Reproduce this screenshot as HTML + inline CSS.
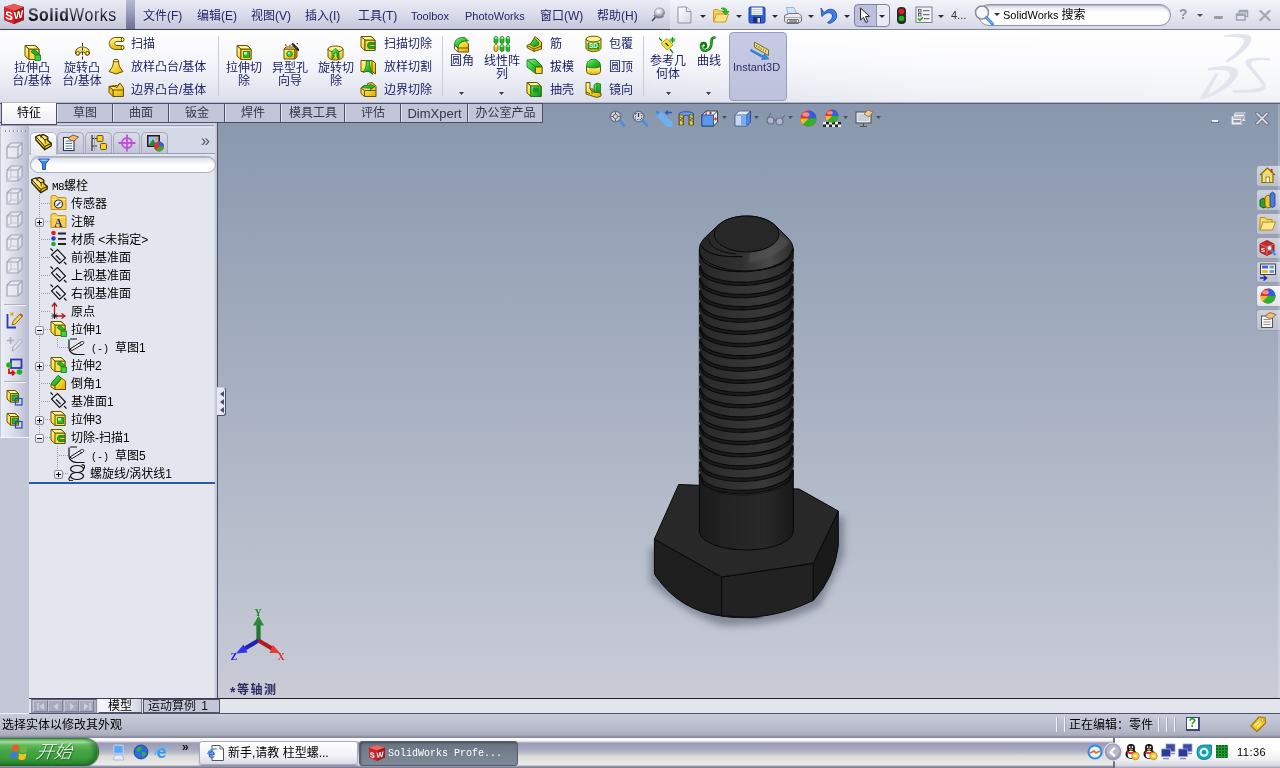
<!DOCTYPE html>
<html lang="zh-CN">
<head>
<meta charset="utf-8">
<title>SolidWorks</title>
<style>
*{box-sizing:border-box;margin:0;padding:0}
html,body{width:1280px;height:768px;overflow:hidden;background:#c8cbd8}
body{position:relative;will-change:transform;font-family:"Liberation Sans","Noto Sans CJK SC",sans-serif;font-size:12px;color:#1c2060;line-height:1}
.abs{position:absolute}
.t{position:absolute;white-space:nowrap}
/* menu bar */
#menubar{left:0;top:0;width:1280px;height:30px;background:linear-gradient(#e9ebf4 0%,#dcdfec 40%,#c5c8db 100%);border-bottom:1px solid #3c3f55}
#logoDiv{left:126px;top:0;width:9px;height:29px;background:linear-gradient(#b9bcd4,#6e7198)}
#qbar{left:670px;top:0;width:610px;height:30px;background:linear-gradient(#f3f4f9,#e3e5ef 55%,#d5d8e6);border-bottom:1px solid #7e8299}
.menu{top:10px;font-size:12px;color:#23276a}
/* ribbon */
#ribbon{left:0;top:30px;width:1280px;height:72px;background:linear-gradient(90deg,rgba(255,255,255,0) 0,rgba(255,255,255,0) 50%,rgba(255,255,255,.5) 72%,rgba(255,255,255,.6) 100%),linear-gradient(#ffffff 0%,#f5f6fa 45%,#dcdfeb 100%)}
.rl{font-size:12px;color:#1d2268;line-height:13px;text-align:center}
.sep{width:1px;background:#c9ccda;top:36px;height:60px}
/* tabs */
#tabrow{left:0;top:103px;width:218px;height:24px;background:#c2c5d8}
.tab{top:104px;height:18px;border-right:1px solid #4b4e66;border-left:1px solid #dfe1ec;font-size:12px;color:#34364a;text-align:center;line-height:19px}
#tabact{left:1px;top:103px;width:56px;height:22px;background:linear-gradient(#ffffff,#eceef5);border:1px solid #4b4e66;border-top:none;font-size:12px;color:#000;text-align:center;line-height:21px;z-index:2}
/* left */
#lstrip{left:0;top:126px;width:29px;height:312px;background:linear-gradient(90deg,#9a9eb4 0,#eceef5 1px,#e4e6f0 8px,#cdd0e0 20px,#b6bace 29px)}
#lstrip2{left:0;top:438px;width:29px;height:261px;background:#c4c7d8}
#tree{left:29px;top:127px;width:186px;height:571px;background:#e3e6ee}
#treeborder{left:214px;top:123px;width:4px;height:576px;background:linear-gradient(90deg,#dfe2ec 0,#d0d3e0 1px,#c2c5d4 2px,#c2c5d4 3px,#4a4e66 3px,#4a4e66 4px)}
.ti{font-size:12px;color:#000;left:71px}
/* viewport */
#view{left:218px;top:103px;width:1062px;height:596px;background:linear-gradient(#8897ad 0%,#c9ccd7 100%)}
/* bottom */
#btabs{left:0;top:698px;width:1280px;height:16px;background:#e3e5ec;border-top:1px solid #1e2028;border-bottom:1px solid #50546a}
#status{left:0;top:714px;width:1280px;height:24px;background:linear-gradient(#c9ccda 0,#bfc3d2 30%,#b2b6c6 70%,#a9adbd 21px,#9a9cae 22px,#7d7f96 24px)}
#taskbar{left:0;top:738px;width:1280px;height:30px;background:linear-gradient(#fdfdff 0,#f4f4fa 3px,#9c9ab4 5px,#a4a4bc 9px,#adb0c3 13px,#c4c7cb 16px,#dcdadc 18px,#eaece8 27px,#a0a2b8 28px,#70728a 30px)}
</style>
</head>
<body>
<!-- VIEW -->
<div id="view" class="abs"></div>
<svg class="abs" style="left:218px;top:103px" width="1062" height="596" viewBox="218 103 1062 596"><defs><linearGradient id="sh" x1="0" y1="0" x2="1" y2="0"><stop offset="0" stop-color="#202020"/><stop offset="0.1" stop-color="#2b2b2b"/><stop offset="0.45" stop-color="#343434"/><stop offset="0.7" stop-color="#383838"/><stop offset="0.9" stop-color="#2c2c2c"/><stop offset="1" stop-color="#1c1c1c"/></linearGradient><linearGradient id="sh2" x1="0" y1="0" x2="1" y2="0"><stop offset="0" stop-color="#1a1a1a"/><stop offset="0.3" stop-color="#232323"/><stop offset="0.7" stop-color="#282828"/><stop offset="1" stop-color="#181818"/></linearGradient><linearGradient id="chm" x1="0" y1="0" x2="1" y2="0"><stop offset="0" stop-color="#262626"/><stop offset="0.45" stop-color="#303030"/><stop offset="0.75" stop-color="#4a4a4a"/><stop offset="1" stop-color="#2a2a2a"/></linearGradient><filter id="blur2"><feGaussianBlur stdDeviation="1.2"/></filter><filter id="blur" x="-20%" y="-20%" width="140%" height="140%"><feGaussianBlur stdDeviation="3.5"/></filter></defs><path d="M650 548 L650 582 Q690 618 724 626 Q784 626 820 606 L844 556 L844 516 Z" fill="#5a6274" opacity="0.6" filter="url(#blur)"/><path d="M654.4 539 L721.7 577 L721.7 616 Q680.5 611 656.4 577 Q654.4 575 654.4 572 Z" fill="#1e1e1e" stroke="#080808" stroke-width="1" stroke-linejoin="round"/><path d="M721.7 577 L813.4 563.3 L813.4 600.3 Q769.4 622.3 721.7 616 Z" fill="#222222" stroke="#080808" stroke-width="1" stroke-linejoin="round"/><path d="M813.4 563.3 L838.3 511 L838.3 546 Q834.3 578 813.4 600.3 Z" fill="#1a1a1a" stroke="#080808" stroke-width="1" stroke-linejoin="round"/><path d="M700 611 Q724 620 764 618 L721.7 615 Z" fill="#101010"/><polygon points="678.7,484.5 654.4,539 721.7,577 813.4,563.3 838.3,511 799,489" fill="#282828" stroke="#080808" stroke-width="1" stroke-linejoin="round"/><path d="M699.3 470 L699.3 532 A47.0 19 0 0 0 793.3 530 L793.3 470 Z" fill="url(#sh2)" stroke="#080808" stroke-width="1"/><path d="M699.3 250.0 L699.3 478 699.3 478.0 L703.6 485.7 L707.8 488.6 L712.1 490.5 L716.4 491.9 L720.7 493.0 L724.9 493.8 L729.2 494.4 L733.5 494.8 L737.8 495.0 L742.0 495.1 L746.3 495.0 L750.6 494.7 L754.8 494.3 L759.1 493.7 L763.4 493.0 L767.7 492.0 L771.9 490.8 L776.2 489.4 L780.5 487.6 L784.8 485.3 L789.0 482.1 L793.3 474.0 L793.3 250.0 Z" fill="url(#sh)" stroke="#101010" stroke-width="0.8"/><path d="M699.3 265.0 L703.6 272.7 L707.8 275.6 L712.1 277.5 L716.4 278.9 L720.7 280.0 L724.9 280.8 L729.2 281.4 L733.5 281.8 L737.8 282.0 L742.0 282.1 L746.3 282.0 L750.6 281.7 L754.8 281.3 L759.1 280.7 L763.4 280.0 L767.7 279.0 L771.9 277.8 L776.2 276.4 L780.5 274.6 L784.8 272.3 L789.0 269.1 L793.3 261.0 L793.3 264.3 L789.0 272.4 L784.8 275.6 L780.5 277.9 L776.2 279.7 L771.9 281.1 L767.7 282.3 L763.4 283.3 L759.1 284.0 L754.8 284.6 L750.6 285.0 L746.3 285.3 L742.0 285.4 L737.8 285.3 L733.5 285.1 L729.2 284.7 L724.9 284.1 L720.7 283.3 L716.4 282.2 L712.1 280.8 L707.8 278.9 L703.6 276.0 L699.3 268.3 Z" fill="#1b1b1b"/><path d="M699.3 265.0 L703.6 272.7 L707.8 275.6 L712.1 277.5 L716.4 278.9 L720.7 280.0 L724.9 280.8 L729.2 281.4 L733.5 281.8 L737.8 282.0 L742.0 282.1 L746.3 282.0 L750.6 281.7 L754.8 281.3 L759.1 280.7 L763.4 280.0 L767.7 279.0 L771.9 277.8 L776.2 276.4 L780.5 274.6 L784.8 272.3 L789.0 269.1 L793.3 261.0" fill="none" stroke="#0a0a0a" stroke-width="1.1"/><path d="M699.3 268.3 L703.6 276.0 L707.8 278.9 L712.1 280.8 L716.4 282.2 L720.7 283.3 L724.9 284.1 L729.2 284.7 L733.5 285.1 L737.8 285.3 L742.0 285.4 L746.3 285.3 L750.6 285.0 L754.8 284.6 L759.1 284.0 L763.4 283.3 L767.7 282.3 L771.9 281.1 L776.2 279.7 L780.5 277.9 L784.8 275.6 L789.0 272.4 L793.3 264.3" fill="none" stroke="#0a0a0a" stroke-width="1.1"/><path d="M698.5 262.0 l2 2.5 l-2 2.5 Z M794.0999999999999 258.0 l-2 2.500 l2 2.500 Z" fill="#8f9bb0" opacity="0.55"/><path d="M699.3 277.2 L703.6 285.0 L707.8 287.8 L712.1 289.7 L716.4 291.2 L720.7 292.3 L724.9 293.1 L729.2 293.7 L733.5 294.1 L737.8 294.3 L742.0 294.4 L746.3 294.2 L750.6 294.0 L754.8 293.6 L759.1 293.0 L763.4 292.2 L767.7 291.3 L771.9 290.1 L776.2 288.6 L780.5 286.8 L784.8 284.5 L789.0 281.3 L793.3 273.2 L793.3 276.6 L789.0 284.6 L784.8 287.8 L780.5 290.1 L776.2 291.9 L771.9 293.4 L767.7 294.6 L763.4 295.5 L759.1 296.3 L754.8 296.9 L750.6 297.3 L746.3 297.6 L742.0 297.7 L737.8 297.6 L733.5 297.4 L729.2 297.0 L724.9 296.4 L720.7 295.6 L716.4 294.5 L712.1 293.0 L707.8 291.1 L703.6 288.3 L699.3 280.6 Z" fill="#1b1b1b"/><path d="M699.3 277.2 L703.6 285.0 L707.8 287.8 L712.1 289.7 L716.4 291.2 L720.7 292.3 L724.9 293.1 L729.2 293.7 L733.5 294.1 L737.8 294.3 L742.0 294.4 L746.3 294.2 L750.6 294.0 L754.8 293.6 L759.1 293.0 L763.4 292.2 L767.7 291.3 L771.9 290.1 L776.2 288.6 L780.5 286.8 L784.8 284.5 L789.0 281.3 L793.3 273.2" fill="none" stroke="#0a0a0a" stroke-width="1.1"/><path d="M699.3 280.6 L703.6 288.3 L707.8 291.1 L712.1 293.0 L716.4 294.5 L720.7 295.6 L724.9 296.4 L729.2 297.0 L733.5 297.4 L737.8 297.6 L742.0 297.7 L746.3 297.6 L750.6 297.3 L754.8 296.9 L759.1 296.3 L763.4 295.5 L767.7 294.6 L771.9 293.4 L776.2 291.9 L780.5 290.1 L784.8 287.8 L789.0 284.6 L793.3 276.6" fill="none" stroke="#0a0a0a" stroke-width="1.1"/><path d="M698.5 274.2 l2 2.5 l-2 2.5 Z M794.0999999999999 270.2 l-2 2.500 l2 2.500 Z" fill="#8f9bb0" opacity="0.55"/><path d="M699.3 289.5 L703.6 297.2 L707.8 300.1 L712.1 302.0 L716.4 303.4 L720.7 304.5 L724.9 305.3 L729.2 305.9 L733.5 306.3 L737.8 306.5 L742.0 306.6 L746.3 306.5 L750.6 306.2 L754.8 305.8 L759.1 305.2 L763.4 304.5 L767.7 303.5 L771.9 302.3 L776.2 300.9 L780.5 299.1 L784.8 296.8 L789.0 293.6 L793.3 285.5 L793.3 288.8 L789.0 296.9 L784.8 300.1 L780.5 302.4 L776.2 304.2 L771.9 305.6 L767.7 306.8 L763.4 307.8 L759.1 308.5 L754.8 309.1 L750.6 309.5 L746.3 309.8 L742.0 309.9 L737.8 309.8 L733.5 309.6 L729.2 309.2 L724.9 308.6 L720.7 307.8 L716.4 306.7 L712.1 305.3 L707.8 303.4 L703.6 300.5 L699.3 292.8 Z" fill="#1b1b1b"/><path d="M699.3 289.5 L703.6 297.2 L707.8 300.1 L712.1 302.0 L716.4 303.4 L720.7 304.5 L724.9 305.3 L729.2 305.9 L733.5 306.3 L737.8 306.5 L742.0 306.6 L746.3 306.5 L750.6 306.2 L754.8 305.8 L759.1 305.2 L763.4 304.5 L767.7 303.5 L771.9 302.3 L776.2 300.9 L780.5 299.1 L784.8 296.8 L789.0 293.6 L793.3 285.5" fill="none" stroke="#0a0a0a" stroke-width="1.1"/><path d="M699.3 292.8 L703.6 300.5 L707.8 303.4 L712.1 305.3 L716.4 306.7 L720.7 307.8 L724.9 308.6 L729.2 309.2 L733.5 309.6 L737.8 309.8 L742.0 309.9 L746.3 309.8 L750.6 309.5 L754.8 309.1 L759.1 308.5 L763.4 307.8 L767.7 306.8 L771.9 305.6 L776.2 304.2 L780.5 302.4 L784.8 300.1 L789.0 296.9 L793.3 288.8" fill="none" stroke="#0a0a0a" stroke-width="1.1"/><path d="M698.5 286.5 l2 2.5 l-2 2.5 Z M794.0999999999999 282.5 l-2 2.500 l2 2.500 Z" fill="#8f9bb0" opacity="0.55"/><path d="M699.3 301.8 L703.6 309.5 L707.8 312.3 L712.1 314.2 L716.4 315.7 L720.7 316.8 L724.9 317.6 L729.2 318.2 L733.5 318.6 L737.8 318.8 L742.0 318.9 L746.3 318.8 L750.6 318.5 L754.8 318.1 L759.1 317.5 L763.4 316.7 L767.7 315.8 L771.9 314.6 L776.2 313.1 L780.5 311.3 L784.8 309.0 L789.0 305.8 L793.3 297.8 L793.3 301.1 L789.0 309.1 L784.8 312.3 L780.5 314.6 L776.2 316.4 L771.9 317.9 L767.7 319.1 L763.4 320.0 L759.1 320.8 L754.8 321.4 L750.6 321.8 L746.3 322.1 L742.0 322.2 L737.8 322.1 L733.5 321.9 L729.2 321.5 L724.9 320.9 L720.7 320.1 L716.4 319.0 L712.1 317.5 L707.8 315.6 L703.6 312.8 L699.3 305.1 Z" fill="#1b1b1b"/><path d="M699.3 301.8 L703.6 309.5 L707.8 312.3 L712.1 314.2 L716.4 315.7 L720.7 316.8 L724.9 317.6 L729.2 318.2 L733.5 318.6 L737.8 318.8 L742.0 318.9 L746.3 318.8 L750.6 318.5 L754.8 318.1 L759.1 317.5 L763.4 316.7 L767.7 315.8 L771.9 314.6 L776.2 313.1 L780.5 311.3 L784.8 309.0 L789.0 305.8 L793.3 297.8" fill="none" stroke="#0a0a0a" stroke-width="1.1"/><path d="M699.3 305.1 L703.6 312.8 L707.8 315.6 L712.1 317.5 L716.4 319.0 L720.7 320.1 L724.9 320.9 L729.2 321.5 L733.5 321.9 L737.8 322.1 L742.0 322.2 L746.3 322.1 L750.6 321.8 L754.8 321.4 L759.1 320.8 L763.4 320.0 L767.7 319.1 L771.9 317.9 L776.2 316.4 L780.5 314.6 L784.8 312.3 L789.0 309.1 L793.3 301.1" fill="none" stroke="#0a0a0a" stroke-width="1.1"/><path d="M698.5 298.8 l2 2.5 l-2 2.5 Z M794.0999999999999 294.8 l-2 2.500 l2 2.500 Z" fill="#8f9bb0" opacity="0.55"/><path d="M699.3 314.0 L703.6 321.7 L707.8 324.6 L712.1 326.5 L716.4 327.9 L720.7 329.0 L724.9 329.8 L729.2 330.4 L733.5 330.8 L737.8 331.0 L742.0 331.1 L746.3 331.0 L750.6 330.7 L754.8 330.3 L759.1 329.7 L763.4 329.0 L767.7 328.0 L771.9 326.8 L776.2 325.4 L780.5 323.6 L784.8 321.3 L789.0 318.1 L793.3 310.0 L793.3 313.3 L789.0 321.4 L784.8 324.6 L780.5 326.9 L776.2 328.7 L771.9 330.1 L767.7 331.3 L763.4 332.3 L759.1 333.0 L754.8 333.6 L750.6 334.0 L746.3 334.3 L742.0 334.4 L737.8 334.3 L733.5 334.1 L729.2 333.7 L724.9 333.1 L720.7 332.3 L716.4 331.2 L712.1 329.8 L707.8 327.9 L703.6 325.0 L699.3 317.3 Z" fill="#1b1b1b"/><path d="M699.3 314.0 L703.6 321.7 L707.8 324.6 L712.1 326.5 L716.4 327.9 L720.7 329.0 L724.9 329.8 L729.2 330.4 L733.5 330.8 L737.8 331.0 L742.0 331.1 L746.3 331.0 L750.6 330.7 L754.8 330.3 L759.1 329.7 L763.4 329.0 L767.7 328.0 L771.9 326.8 L776.2 325.4 L780.5 323.6 L784.8 321.3 L789.0 318.1 L793.3 310.0" fill="none" stroke="#0a0a0a" stroke-width="1.1"/><path d="M699.3 317.3 L703.6 325.0 L707.8 327.9 L712.1 329.8 L716.4 331.2 L720.7 332.3 L724.9 333.1 L729.2 333.7 L733.5 334.1 L737.8 334.3 L742.0 334.4 L746.3 334.3 L750.6 334.0 L754.8 333.6 L759.1 333.0 L763.4 332.3 L767.7 331.3 L771.9 330.1 L776.2 328.7 L780.5 326.9 L784.8 324.6 L789.0 321.4 L793.3 313.3" fill="none" stroke="#0a0a0a" stroke-width="1.1"/><path d="M698.5 311.0 l2 2.5 l-2 2.5 Z M794.0999999999999 307.0 l-2 2.500 l2 2.500 Z" fill="#8f9bb0" opacity="0.55"/><path d="M699.3 326.2 L703.6 334.0 L707.8 336.8 L712.1 338.7 L716.4 340.2 L720.7 341.3 L724.9 342.1 L729.2 342.7 L733.5 343.1 L737.8 343.3 L742.0 343.4 L746.3 343.2 L750.6 343.0 L754.8 342.6 L759.1 342.0 L763.4 341.2 L767.7 340.3 L771.9 339.1 L776.2 337.6 L780.5 335.8 L784.8 333.5 L789.0 330.3 L793.3 322.2 L793.3 325.6 L789.0 333.6 L784.8 336.8 L780.5 339.1 L776.2 340.9 L771.9 342.4 L767.7 343.6 L763.4 344.5 L759.1 345.3 L754.8 345.9 L750.6 346.3 L746.3 346.6 L742.0 346.7 L737.8 346.6 L733.5 346.4 L729.2 346.0 L724.9 345.4 L720.7 344.6 L716.4 343.5 L712.1 342.0 L707.8 340.1 L703.6 337.3 L699.3 329.6 Z" fill="#1b1b1b"/><path d="M699.3 326.2 L703.6 334.0 L707.8 336.8 L712.1 338.7 L716.4 340.2 L720.7 341.3 L724.9 342.1 L729.2 342.7 L733.5 343.1 L737.8 343.3 L742.0 343.4 L746.3 343.2 L750.6 343.0 L754.8 342.6 L759.1 342.0 L763.4 341.2 L767.7 340.3 L771.9 339.1 L776.2 337.6 L780.5 335.8 L784.8 333.5 L789.0 330.3 L793.3 322.2" fill="none" stroke="#0a0a0a" stroke-width="1.1"/><path d="M699.3 329.6 L703.6 337.3 L707.8 340.1 L712.1 342.0 L716.4 343.5 L720.7 344.6 L724.9 345.4 L729.2 346.0 L733.5 346.4 L737.8 346.6 L742.0 346.7 L746.3 346.6 L750.6 346.3 L754.8 345.9 L759.1 345.3 L763.4 344.5 L767.7 343.6 L771.9 342.4 L776.2 340.9 L780.5 339.1 L784.8 336.8 L789.0 333.6 L793.3 325.6" fill="none" stroke="#0a0a0a" stroke-width="1.1"/><path d="M698.5 323.2 l2 2.5 l-2 2.5 Z M794.0999999999999 319.2 l-2 2.500 l2 2.500 Z" fill="#8f9bb0" opacity="0.55"/><path d="M699.3 338.5 L703.6 346.2 L707.8 349.1 L712.1 351.0 L716.4 352.4 L720.7 353.5 L724.9 354.3 L729.2 354.9 L733.5 355.3 L737.8 355.5 L742.0 355.6 L746.3 355.5 L750.6 355.2 L754.8 354.8 L759.1 354.2 L763.4 353.5 L767.7 352.5 L771.9 351.3 L776.2 349.9 L780.5 348.1 L784.8 345.8 L789.0 342.6 L793.3 334.5 L793.3 337.8 L789.0 345.9 L784.8 349.1 L780.5 351.4 L776.2 353.2 L771.9 354.6 L767.7 355.8 L763.4 356.8 L759.1 357.5 L754.8 358.1 L750.6 358.5 L746.3 358.8 L742.0 358.9 L737.8 358.8 L733.5 358.6 L729.2 358.2 L724.9 357.6 L720.7 356.8 L716.4 355.7 L712.1 354.3 L707.8 352.4 L703.6 349.5 L699.3 341.8 Z" fill="#1b1b1b"/><path d="M699.3 338.5 L703.6 346.2 L707.8 349.1 L712.1 351.0 L716.4 352.4 L720.7 353.5 L724.9 354.3 L729.2 354.9 L733.5 355.3 L737.8 355.5 L742.0 355.6 L746.3 355.5 L750.6 355.2 L754.8 354.8 L759.1 354.2 L763.4 353.5 L767.7 352.5 L771.9 351.3 L776.2 349.9 L780.5 348.1 L784.8 345.8 L789.0 342.6 L793.3 334.5" fill="none" stroke="#0a0a0a" stroke-width="1.1"/><path d="M699.3 341.8 L703.6 349.5 L707.8 352.4 L712.1 354.3 L716.4 355.7 L720.7 356.8 L724.9 357.6 L729.2 358.2 L733.5 358.6 L737.8 358.8 L742.0 358.9 L746.3 358.8 L750.6 358.5 L754.8 358.1 L759.1 357.5 L763.4 356.8 L767.7 355.8 L771.9 354.6 L776.2 353.2 L780.5 351.4 L784.8 349.1 L789.0 345.9 L793.3 337.8" fill="none" stroke="#0a0a0a" stroke-width="1.1"/><path d="M698.5 335.5 l2 2.5 l-2 2.5 Z M794.0999999999999 331.5 l-2 2.500 l2 2.500 Z" fill="#8f9bb0" opacity="0.55"/><path d="M699.3 350.8 L703.6 358.5 L707.8 361.3 L712.1 363.2 L716.4 364.7 L720.7 365.8 L724.9 366.6 L729.2 367.2 L733.5 367.6 L737.8 367.8 L742.0 367.9 L746.3 367.8 L750.6 367.5 L754.8 367.1 L759.1 366.5 L763.4 365.7 L767.7 364.8 L771.9 363.6 L776.2 362.1 L780.5 360.3 L784.8 358.0 L789.0 354.8 L793.3 346.8 L793.3 350.1 L789.0 358.1 L784.8 361.3 L780.5 363.6 L776.2 365.4 L771.9 366.9 L767.7 368.1 L763.4 369.0 L759.1 369.8 L754.8 370.4 L750.6 370.8 L746.3 371.1 L742.0 371.2 L737.8 371.1 L733.5 370.9 L729.2 370.5 L724.9 369.9 L720.7 369.1 L716.4 368.0 L712.1 366.5 L707.8 364.6 L703.6 361.8 L699.3 354.1 Z" fill="#1b1b1b"/><path d="M699.3 350.8 L703.6 358.5 L707.8 361.3 L712.1 363.2 L716.4 364.7 L720.7 365.8 L724.9 366.6 L729.2 367.2 L733.5 367.6 L737.8 367.8 L742.0 367.9 L746.3 367.8 L750.6 367.5 L754.8 367.1 L759.1 366.5 L763.4 365.7 L767.7 364.8 L771.9 363.6 L776.2 362.1 L780.5 360.3 L784.8 358.0 L789.0 354.8 L793.3 346.8" fill="none" stroke="#0a0a0a" stroke-width="1.1"/><path d="M699.3 354.1 L703.6 361.8 L707.8 364.6 L712.1 366.5 L716.4 368.0 L720.7 369.1 L724.9 369.9 L729.2 370.5 L733.5 370.9 L737.8 371.1 L742.0 371.2 L746.3 371.1 L750.6 370.8 L754.8 370.4 L759.1 369.8 L763.4 369.0 L767.7 368.1 L771.9 366.9 L776.2 365.4 L780.5 363.6 L784.8 361.3 L789.0 358.1 L793.3 350.1" fill="none" stroke="#0a0a0a" stroke-width="1.1"/><path d="M698.5 347.8 l2 2.5 l-2 2.5 Z M794.0999999999999 343.8 l-2 2.500 l2 2.500 Z" fill="#8f9bb0" opacity="0.55"/><path d="M699.3 363.0 L703.6 370.7 L707.8 373.6 L712.1 375.5 L716.4 376.9 L720.7 378.0 L724.9 378.8 L729.2 379.4 L733.5 379.8 L737.8 380.0 L742.0 380.1 L746.3 380.0 L750.6 379.7 L754.8 379.3 L759.1 378.7 L763.4 378.0 L767.7 377.0 L771.9 375.8 L776.2 374.4 L780.5 372.6 L784.8 370.3 L789.0 367.1 L793.3 359.0 L793.3 362.3 L789.0 370.4 L784.8 373.6 L780.5 375.9 L776.2 377.7 L771.9 379.1 L767.7 380.3 L763.4 381.3 L759.1 382.0 L754.8 382.6 L750.6 383.0 L746.3 383.3 L742.0 383.4 L737.8 383.3 L733.5 383.1 L729.2 382.7 L724.9 382.1 L720.7 381.3 L716.4 380.2 L712.1 378.8 L707.8 376.9 L703.6 374.0 L699.3 366.3 Z" fill="#1b1b1b"/><path d="M699.3 363.0 L703.6 370.7 L707.8 373.6 L712.1 375.5 L716.4 376.9 L720.7 378.0 L724.9 378.8 L729.2 379.4 L733.5 379.8 L737.8 380.0 L742.0 380.1 L746.3 380.0 L750.6 379.7 L754.8 379.3 L759.1 378.7 L763.4 378.0 L767.7 377.0 L771.9 375.8 L776.2 374.4 L780.5 372.6 L784.8 370.3 L789.0 367.1 L793.3 359.0" fill="none" stroke="#0a0a0a" stroke-width="1.1"/><path d="M699.3 366.3 L703.6 374.0 L707.8 376.9 L712.1 378.8 L716.4 380.2 L720.7 381.3 L724.9 382.1 L729.2 382.7 L733.5 383.1 L737.8 383.3 L742.0 383.4 L746.3 383.3 L750.6 383.0 L754.8 382.6 L759.1 382.0 L763.4 381.3 L767.7 380.3 L771.9 379.1 L776.2 377.7 L780.5 375.9 L784.8 373.6 L789.0 370.4 L793.3 362.3" fill="none" stroke="#0a0a0a" stroke-width="1.1"/><path d="M698.5 360.0 l2 2.5 l-2 2.5 Z M794.0999999999999 356.0 l-2 2.500 l2 2.500 Z" fill="#8f9bb0" opacity="0.55"/><path d="M699.3 375.2 L703.6 383.0 L707.8 385.8 L712.1 387.7 L716.4 389.2 L720.7 390.3 L724.9 391.1 L729.2 391.7 L733.5 392.1 L737.8 392.3 L742.0 392.4 L746.3 392.2 L750.6 392.0 L754.8 391.6 L759.1 391.0 L763.4 390.2 L767.7 389.3 L771.9 388.1 L776.2 386.6 L780.5 384.8 L784.8 382.5 L789.0 379.3 L793.3 371.2 L793.3 374.6 L789.0 382.6 L784.8 385.8 L780.5 388.1 L776.2 389.9 L771.9 391.4 L767.7 392.6 L763.4 393.5 L759.1 394.3 L754.8 394.9 L750.6 395.3 L746.3 395.6 L742.0 395.7 L737.8 395.6 L733.5 395.4 L729.2 395.0 L724.9 394.4 L720.7 393.6 L716.4 392.5 L712.1 391.0 L707.8 389.1 L703.6 386.3 L699.3 378.6 Z" fill="#1b1b1b"/><path d="M699.3 375.2 L703.6 383.0 L707.8 385.8 L712.1 387.7 L716.4 389.2 L720.7 390.3 L724.9 391.1 L729.2 391.7 L733.5 392.1 L737.8 392.3 L742.0 392.4 L746.3 392.2 L750.6 392.0 L754.8 391.6 L759.1 391.0 L763.4 390.2 L767.7 389.3 L771.9 388.1 L776.2 386.6 L780.5 384.8 L784.8 382.5 L789.0 379.3 L793.3 371.2" fill="none" stroke="#0a0a0a" stroke-width="1.1"/><path d="M699.3 378.6 L703.6 386.3 L707.8 389.1 L712.1 391.0 L716.4 392.5 L720.7 393.6 L724.9 394.4 L729.2 395.0 L733.5 395.4 L737.8 395.6 L742.0 395.7 L746.3 395.6 L750.6 395.3 L754.8 394.9 L759.1 394.3 L763.4 393.5 L767.7 392.6 L771.9 391.4 L776.2 389.9 L780.5 388.1 L784.8 385.8 L789.0 382.6 L793.3 374.6" fill="none" stroke="#0a0a0a" stroke-width="1.1"/><path d="M698.5 372.2 l2 2.5 l-2 2.5 Z M794.0999999999999 368.2 l-2 2.500 l2 2.500 Z" fill="#8f9bb0" opacity="0.55"/><path d="M699.3 387.5 L703.6 395.2 L707.8 398.1 L712.1 400.0 L716.4 401.4 L720.7 402.5 L724.9 403.3 L729.2 403.9 L733.5 404.3 L737.8 404.5 L742.0 404.6 L746.3 404.5 L750.6 404.2 L754.8 403.8 L759.1 403.2 L763.4 402.5 L767.7 401.5 L771.9 400.3 L776.2 398.9 L780.5 397.1 L784.8 394.8 L789.0 391.6 L793.3 383.5 L793.3 386.8 L789.0 394.9 L784.8 398.1 L780.5 400.4 L776.2 402.2 L771.9 403.6 L767.7 404.8 L763.4 405.8 L759.1 406.5 L754.8 407.1 L750.6 407.5 L746.3 407.8 L742.0 407.9 L737.8 407.8 L733.5 407.6 L729.2 407.2 L724.9 406.6 L720.7 405.8 L716.4 404.7 L712.1 403.3 L707.8 401.4 L703.6 398.5 L699.3 390.8 Z" fill="#1b1b1b"/><path d="M699.3 387.5 L703.6 395.2 L707.8 398.1 L712.1 400.0 L716.4 401.4 L720.7 402.5 L724.9 403.3 L729.2 403.9 L733.5 404.3 L737.8 404.5 L742.0 404.6 L746.3 404.5 L750.6 404.2 L754.8 403.8 L759.1 403.2 L763.4 402.5 L767.7 401.5 L771.9 400.3 L776.2 398.9 L780.5 397.1 L784.8 394.8 L789.0 391.6 L793.3 383.5" fill="none" stroke="#0a0a0a" stroke-width="1.1"/><path d="M699.3 390.8 L703.6 398.5 L707.8 401.4 L712.1 403.3 L716.4 404.7 L720.7 405.8 L724.9 406.6 L729.2 407.2 L733.5 407.6 L737.8 407.8 L742.0 407.9 L746.3 407.8 L750.6 407.5 L754.8 407.1 L759.1 406.5 L763.4 405.8 L767.7 404.8 L771.9 403.6 L776.2 402.2 L780.5 400.4 L784.8 398.1 L789.0 394.9 L793.3 386.8" fill="none" stroke="#0a0a0a" stroke-width="1.1"/><path d="M698.5 384.5 l2 2.5 l-2 2.5 Z M794.0999999999999 380.5 l-2 2.500 l2 2.500 Z" fill="#8f9bb0" opacity="0.55"/><path d="M699.3 399.8 L703.6 407.5 L707.8 410.3 L712.1 412.2 L716.4 413.7 L720.7 414.8 L724.9 415.6 L729.2 416.2 L733.5 416.6 L737.8 416.8 L742.0 416.9 L746.3 416.8 L750.6 416.5 L754.8 416.1 L759.1 415.5 L763.4 414.7 L767.7 413.8 L771.9 412.6 L776.2 411.1 L780.5 409.3 L784.8 407.0 L789.0 403.8 L793.3 395.8 L793.3 399.1 L789.0 407.1 L784.8 410.3 L780.5 412.6 L776.2 414.4 L771.9 415.9 L767.7 417.1 L763.4 418.0 L759.1 418.8 L754.8 419.4 L750.6 419.8 L746.3 420.1 L742.0 420.2 L737.8 420.1 L733.5 419.9 L729.2 419.5 L724.9 418.9 L720.7 418.1 L716.4 417.0 L712.1 415.5 L707.8 413.6 L703.6 410.8 L699.3 403.1 Z" fill="#1b1b1b"/><path d="M699.3 399.8 L703.6 407.5 L707.8 410.3 L712.1 412.2 L716.4 413.7 L720.7 414.8 L724.9 415.6 L729.2 416.2 L733.5 416.6 L737.8 416.8 L742.0 416.9 L746.3 416.8 L750.6 416.5 L754.8 416.1 L759.1 415.5 L763.4 414.7 L767.7 413.8 L771.9 412.6 L776.2 411.1 L780.5 409.3 L784.8 407.0 L789.0 403.8 L793.3 395.8" fill="none" stroke="#0a0a0a" stroke-width="1.1"/><path d="M699.3 403.1 L703.6 410.8 L707.8 413.6 L712.1 415.5 L716.4 417.0 L720.7 418.1 L724.9 418.9 L729.2 419.5 L733.5 419.9 L737.8 420.1 L742.0 420.2 L746.3 420.1 L750.6 419.8 L754.8 419.4 L759.1 418.8 L763.4 418.0 L767.7 417.1 L771.9 415.9 L776.2 414.4 L780.5 412.6 L784.8 410.3 L789.0 407.1 L793.3 399.1" fill="none" stroke="#0a0a0a" stroke-width="1.1"/><path d="M698.5 396.8 l2 2.5 l-2 2.5 Z M794.0999999999999 392.8 l-2 2.500 l2 2.500 Z" fill="#8f9bb0" opacity="0.55"/><path d="M699.3 412.0 L703.6 419.7 L707.8 422.6 L712.1 424.5 L716.4 425.9 L720.7 427.0 L724.9 427.8 L729.2 428.4 L733.5 428.8 L737.8 429.0 L742.0 429.1 L746.3 429.0 L750.6 428.7 L754.8 428.3 L759.1 427.7 L763.4 427.0 L767.7 426.0 L771.9 424.8 L776.2 423.4 L780.5 421.6 L784.8 419.3 L789.0 416.1 L793.3 408.0 L793.3 411.3 L789.0 419.4 L784.8 422.6 L780.5 424.9 L776.2 426.7 L771.9 428.1 L767.7 429.3 L763.4 430.3 L759.1 431.0 L754.8 431.6 L750.6 432.0 L746.3 432.3 L742.0 432.4 L737.8 432.3 L733.5 432.1 L729.2 431.7 L724.9 431.1 L720.7 430.3 L716.4 429.2 L712.1 427.8 L707.8 425.9 L703.6 423.0 L699.3 415.3 Z" fill="#1b1b1b"/><path d="M699.3 412.0 L703.6 419.7 L707.8 422.6 L712.1 424.5 L716.4 425.9 L720.7 427.0 L724.9 427.8 L729.2 428.4 L733.5 428.8 L737.8 429.0 L742.0 429.1 L746.3 429.0 L750.6 428.7 L754.8 428.3 L759.1 427.7 L763.4 427.0 L767.7 426.0 L771.9 424.8 L776.2 423.4 L780.5 421.6 L784.8 419.3 L789.0 416.1 L793.3 408.0" fill="none" stroke="#0a0a0a" stroke-width="1.1"/><path d="M699.3 415.3 L703.6 423.0 L707.8 425.9 L712.1 427.8 L716.4 429.2 L720.7 430.3 L724.9 431.1 L729.2 431.7 L733.5 432.1 L737.8 432.3 L742.0 432.4 L746.3 432.3 L750.6 432.0 L754.8 431.6 L759.1 431.0 L763.4 430.3 L767.7 429.3 L771.9 428.1 L776.2 426.7 L780.5 424.9 L784.8 422.6 L789.0 419.4 L793.3 411.3" fill="none" stroke="#0a0a0a" stroke-width="1.1"/><path d="M698.5 409.0 l2 2.5 l-2 2.5 Z M794.0999999999999 405.0 l-2 2.500 l2 2.500 Z" fill="#8f9bb0" opacity="0.55"/><path d="M699.3 424.2 L703.6 432.0 L707.8 434.8 L712.1 436.7 L716.4 438.2 L720.7 439.3 L724.9 440.1 L729.2 440.7 L733.5 441.1 L737.8 441.3 L742.0 441.4 L746.3 441.2 L750.6 441.0 L754.8 440.6 L759.1 440.0 L763.4 439.2 L767.7 438.3 L771.9 437.1 L776.2 435.6 L780.5 433.8 L784.8 431.5 L789.0 428.3 L793.3 420.2 L793.3 423.6 L789.0 431.6 L784.8 434.8 L780.5 437.1 L776.2 438.9 L771.9 440.4 L767.7 441.6 L763.4 442.5 L759.1 443.3 L754.8 443.9 L750.6 444.3 L746.3 444.6 L742.0 444.7 L737.8 444.6 L733.5 444.4 L729.2 444.0 L724.9 443.4 L720.7 442.6 L716.4 441.5 L712.1 440.0 L707.8 438.1 L703.6 435.3 L699.3 427.6 Z" fill="#1b1b1b"/><path d="M699.3 424.2 L703.6 432.0 L707.8 434.8 L712.1 436.7 L716.4 438.2 L720.7 439.3 L724.9 440.1 L729.2 440.7 L733.5 441.1 L737.8 441.3 L742.0 441.4 L746.3 441.2 L750.6 441.0 L754.8 440.6 L759.1 440.0 L763.4 439.2 L767.7 438.3 L771.9 437.1 L776.2 435.6 L780.5 433.8 L784.8 431.5 L789.0 428.3 L793.3 420.2" fill="none" stroke="#0a0a0a" stroke-width="1.1"/><path d="M699.3 427.6 L703.6 435.3 L707.8 438.1 L712.1 440.0 L716.4 441.5 L720.7 442.6 L724.9 443.4 L729.2 444.0 L733.5 444.4 L737.8 444.6 L742.0 444.7 L746.3 444.6 L750.6 444.3 L754.8 443.9 L759.1 443.3 L763.4 442.5 L767.7 441.6 L771.9 440.4 L776.2 438.9 L780.5 437.1 L784.8 434.8 L789.0 431.6 L793.3 423.6" fill="none" stroke="#0a0a0a" stroke-width="1.1"/><path d="M698.5 421.2 l2 2.5 l-2 2.5 Z M794.0999999999999 417.2 l-2 2.500 l2 2.500 Z" fill="#8f9bb0" opacity="0.55"/><path d="M699.3 436.5 L703.6 444.2 L707.8 447.1 L712.1 449.0 L716.4 450.4 L720.7 451.5 L724.9 452.3 L729.2 452.9 L733.5 453.3 L737.8 453.5 L742.0 453.6 L746.3 453.5 L750.6 453.2 L754.8 452.8 L759.1 452.2 L763.4 451.5 L767.7 450.5 L771.9 449.3 L776.2 447.9 L780.5 446.1 L784.8 443.8 L789.0 440.6 L793.3 432.5 L793.3 435.8 L789.0 443.9 L784.8 447.1 L780.5 449.4 L776.2 451.2 L771.9 452.6 L767.7 453.8 L763.4 454.8 L759.1 455.5 L754.8 456.1 L750.6 456.5 L746.3 456.8 L742.0 456.9 L737.8 456.8 L733.5 456.6 L729.2 456.2 L724.9 455.6 L720.7 454.8 L716.4 453.7 L712.1 452.3 L707.8 450.4 L703.6 447.5 L699.3 439.8 Z" fill="#1b1b1b"/><path d="M699.3 436.5 L703.6 444.2 L707.8 447.1 L712.1 449.0 L716.4 450.4 L720.7 451.5 L724.9 452.3 L729.2 452.9 L733.5 453.3 L737.8 453.5 L742.0 453.6 L746.3 453.5 L750.6 453.2 L754.8 452.8 L759.1 452.2 L763.4 451.5 L767.7 450.5 L771.9 449.3 L776.2 447.9 L780.5 446.1 L784.8 443.8 L789.0 440.6 L793.3 432.5" fill="none" stroke="#0a0a0a" stroke-width="1.1"/><path d="M699.3 439.8 L703.6 447.5 L707.8 450.4 L712.1 452.3 L716.4 453.7 L720.7 454.8 L724.9 455.6 L729.2 456.2 L733.5 456.6 L737.8 456.8 L742.0 456.9 L746.3 456.8 L750.6 456.5 L754.8 456.1 L759.1 455.5 L763.4 454.8 L767.7 453.8 L771.9 452.6 L776.2 451.2 L780.5 449.4 L784.8 447.1 L789.0 443.9 L793.3 435.8" fill="none" stroke="#0a0a0a" stroke-width="1.1"/><path d="M698.5 433.5 l2 2.5 l-2 2.5 Z M794.0999999999999 429.5 l-2 2.500 l2 2.500 Z" fill="#8f9bb0" opacity="0.55"/><path d="M699.3 448.8 L703.6 456.5 L707.8 459.3 L712.1 461.2 L716.4 462.7 L720.7 463.8 L724.9 464.6 L729.2 465.2 L733.5 465.6 L737.8 465.8 L742.0 465.9 L746.3 465.8 L750.6 465.5 L754.8 465.1 L759.1 464.5 L763.4 463.7 L767.7 462.8 L771.9 461.6 L776.2 460.1 L780.5 458.3 L784.8 456.0 L789.0 452.8 L793.3 444.8 L793.3 448.1 L789.0 456.1 L784.8 459.3 L780.5 461.6 L776.2 463.4 L771.9 464.9 L767.7 466.1 L763.4 467.0 L759.1 467.8 L754.8 468.4 L750.6 468.8 L746.3 469.1 L742.0 469.2 L737.8 469.1 L733.5 468.9 L729.2 468.5 L724.9 467.9 L720.7 467.1 L716.4 466.0 L712.1 464.5 L707.8 462.6 L703.6 459.8 L699.3 452.1 Z" fill="#1b1b1b"/><path d="M699.3 448.8 L703.6 456.5 L707.8 459.3 L712.1 461.2 L716.4 462.7 L720.7 463.8 L724.9 464.6 L729.2 465.2 L733.5 465.6 L737.8 465.8 L742.0 465.9 L746.3 465.8 L750.6 465.5 L754.8 465.1 L759.1 464.5 L763.4 463.7 L767.7 462.8 L771.9 461.6 L776.2 460.1 L780.5 458.3 L784.8 456.0 L789.0 452.8 L793.3 444.8" fill="none" stroke="#0a0a0a" stroke-width="1.1"/><path d="M699.3 452.1 L703.6 459.8 L707.8 462.6 L712.1 464.5 L716.4 466.0 L720.7 467.1 L724.9 467.9 L729.2 468.5 L733.5 468.9 L737.8 469.1 L742.0 469.2 L746.3 469.1 L750.6 468.8 L754.8 468.4 L759.1 467.8 L763.4 467.0 L767.7 466.1 L771.9 464.9 L776.2 463.4 L780.5 461.6 L784.8 459.3 L789.0 456.1 L793.3 448.1" fill="none" stroke="#0a0a0a" stroke-width="1.1"/><path d="M698.5 445.8 l2 2.5 l-2 2.5 Z M794.0999999999999 441.8 l-2 2.500 l2 2.500 Z" fill="#8f9bb0" opacity="0.55"/><path d="M699.3 461.0 L703.6 468.7 L707.8 471.6 L712.1 473.5 L716.4 474.9 L720.7 476.0 L724.9 476.8 L729.2 477.4 L733.5 477.8 L737.8 478.0 L742.0 478.1 L746.3 478.0 L750.6 477.7 L754.8 477.3 L759.1 476.7 L763.4 476.0 L767.7 475.0 L771.9 473.8 L776.2 472.4 L780.5 470.6 L784.8 468.3 L789.0 465.1 L793.3 457.0 L793.3 460.3 L789.0 468.4 L784.8 471.6 L780.5 473.9 L776.2 475.7 L771.9 477.1 L767.7 478.3 L763.4 479.3 L759.1 480.0 L754.8 480.6 L750.6 481.0 L746.3 481.3 L742.0 481.4 L737.8 481.3 L733.5 481.1 L729.2 480.7 L724.9 480.1 L720.7 479.3 L716.4 478.2 L712.1 476.8 L707.8 474.9 L703.6 472.0 L699.3 464.3 Z" fill="#1b1b1b"/><path d="M699.3 461.0 L703.6 468.7 L707.8 471.6 L712.1 473.5 L716.4 474.9 L720.7 476.0 L724.9 476.8 L729.2 477.4 L733.5 477.8 L737.8 478.0 L742.0 478.1 L746.3 478.0 L750.6 477.7 L754.8 477.3 L759.1 476.7 L763.4 476.0 L767.7 475.0 L771.9 473.8 L776.2 472.4 L780.5 470.6 L784.8 468.3 L789.0 465.1 L793.3 457.0" fill="none" stroke="#0a0a0a" stroke-width="1.1"/><path d="M699.3 464.3 L703.6 472.0 L707.8 474.9 L712.1 476.8 L716.4 478.2 L720.7 479.3 L724.9 480.1 L729.2 480.7 L733.5 481.1 L737.8 481.3 L742.0 481.4 L746.3 481.3 L750.6 481.0 L754.8 480.6 L759.1 480.0 L763.4 479.3 L767.7 478.3 L771.9 477.1 L776.2 475.7 L780.5 473.9 L784.8 471.6 L789.0 468.4 L793.3 460.3" fill="none" stroke="#0a0a0a" stroke-width="1.1"/><path d="M698.5 458.0 l2 2.5 l-2 2.5 Z M794.0999999999999 454.0 l-2 2.500 l2 2.500 Z" fill="#8f9bb0" opacity="0.55"/><path d="M699.3 473.2 L703.6 481.0 L707.8 483.8 L712.1 485.7 L716.4 487.2 L720.7 488.3 L724.9 489.1 L729.2 489.7 L733.5 490.1 L737.8 490.3 L742.0 490.4 L746.3 490.2 L750.6 490.0 L754.8 489.6 L759.1 489.0 L763.4 488.2 L767.7 487.3 L771.9 486.1 L776.2 484.6 L780.5 482.8 L784.8 480.5 L789.0 477.3 L793.3 469.2 L793.3 472.6 L789.0 480.6 L784.8 483.8 L780.5 486.1 L776.2 487.9 L771.9 489.4 L767.7 490.6 L763.4 491.5 L759.1 492.3 L754.8 492.9 L750.6 493.3 L746.3 493.6 L742.0 493.7 L737.8 493.6 L733.5 493.4 L729.2 493.0 L724.9 492.4 L720.7 491.6 L716.4 490.5 L712.1 489.0 L707.8 487.1 L703.6 484.3 L699.3 476.6 Z" fill="#1b1b1b"/><path d="M699.3 473.2 L703.6 481.0 L707.8 483.8 L712.1 485.7 L716.4 487.2 L720.7 488.3 L724.9 489.1 L729.2 489.7 L733.5 490.1 L737.8 490.3 L742.0 490.4 L746.3 490.2 L750.6 490.0 L754.8 489.6 L759.1 489.0 L763.4 488.2 L767.7 487.3 L771.9 486.1 L776.2 484.6 L780.5 482.8 L784.8 480.5 L789.0 477.3 L793.3 469.2" fill="none" stroke="#0a0a0a" stroke-width="1.1"/><path d="M699.3 476.6 L703.6 484.3 L707.8 487.1 L712.1 489.0 L716.4 490.5 L720.7 491.6 L724.9 492.4 L729.2 493.0 L733.5 493.4 L737.8 493.6 L742.0 493.7 L746.3 493.6 L750.6 493.3 L754.8 492.9 L759.1 492.3 L763.4 491.5 L767.7 490.6 L771.9 489.4 L776.2 487.9 L780.5 486.1 L784.8 483.8 L789.0 480.6 L793.3 472.6" fill="none" stroke="#0a0a0a" stroke-width="1.1"/><path d="M698.5 470.2 l2 2.5 l-2 2.5 Z M794.0999999999999 466.2 l-2 2.500 l2 2.500 Z" fill="#8f9bb0" opacity="0.55"/><path d="M699.3 250.0 L699.6 247.3 L700.3 244.6 L701.6 242.0 L703.4 239.4 L705.6 237.0 L718.5 225.0 L720.4 223.4 L722.5 222.0 L724.9 220.6 L727.6 219.4 L730.4 218.4 L733.4 217.6 L736.6 216.9 L739.9 216.4 L743.2 216.1 L746.6 216.0 L750.0 216.1 L753.3 216.4 L756.6 216.9 L759.8 217.6 L762.8 218.4 L765.6 219.4 L768.3 220.6 L770.7 222.0 L772.8 223.4 L774.7 225.0 L787.0 237.0 L789.2 239.4 L791.0 242.0 L792.3 244.6 L793.0 247.3 L793.3 250.0 L793.0 252.2 L792.3 254.4 L791.0 256.5 L789.2 258.5 L787.0 260.5 L784.3 262.3 L781.2 264.1 L777.7 265.6 L773.9 267.0 L769.8 268.2 L765.4 269.2 L760.8 270.0 L756.1 270.5 L751.2 270.9 L746.3 271.0 L741.4 270.9 L736.5 270.5 L731.8 270.0 L727.2 269.2 L722.8 268.2 L718.7 267.0 L714.9 265.6 L711.4 264.1 L708.3 262.3 L705.6 260.5 L703.4 258.5 L701.6 256.5 L700.3 254.4 L699.6 252.2 Z" fill="url(#chm)" stroke="#080808" stroke-width="1" stroke-linejoin="round"/><path d="M748.3 263.0 Q776.3 258.0 790.3 242.0 L781.3 236.0 Q768.3 248.0 750.3 252.0 Z" fill="#565656" opacity="0.55" filter="url(#blur2)"/><path d="M699.3 253.5 L703.6 261.8 L707.8 264.8 L712.1 266.9 L716.4 268.4 L720.7 269.5 L724.9 270.4 L729.2 271.0 L733.5 271.4 L737.8 271.6 L742.0 271.6 L746.3 271.5 L750.6 271.2 L754.8 270.7 L759.1 270.0 L763.4 269.2 L767.7 268.1 L771.9 266.8 L776.2 265.2 L780.5 263.3 L784.8 260.7 L789.0 257.3 L793.3 248.5" fill="none" stroke="#0a0a0a" stroke-width="1.3"/><path d="M700.3 244.0 Q706.3 258.0 742.3 256.5" fill="none" stroke="#0a0a0a" stroke-width="1.1"/><path d="M707.8 238.0 Q710.3 252.0 736.3 254.0" fill="none" stroke="#0a0a0a" stroke-width="1"/><ellipse cx="746.6" cy="234.0" rx="32.4" ry="18.0" fill="#272727" stroke="#080808" stroke-width="1"/></svg>
<svg class="abs" style="left:609px;top:110px" width="17" height="17" viewBox="0 0 17 17"><circle cx="6.500" cy="6.500" r="5.300" fill="#d4d8e0" stroke="#6f7488" stroke-width="1.500"/><path d="M10.500 10.500 L15 15.500" stroke="#4a8ae0" stroke-width="2.600" stroke-linecap="round"/><circle cx="6.500" cy="6.500" r="2.200" fill="none" stroke="#555" stroke-width="0.900"/><path d="M6.500 2 v2 M6.500 9 v2 M2 6.500 h2 M9 6.500 h2" stroke="#555" stroke-width="0.900"/></svg>
<svg class="abs" style="left:632px;top:110px" width="17" height="17" viewBox="0 0 17 17"><circle cx="6.500" cy="6.500" r="5.300" fill="#d4d8e0" stroke="#6f7488" stroke-width="1.500"/><path d="M10.500 10.500 L15 15.500" stroke="#4a8ae0" stroke-width="2.600" stroke-linecap="round"/><rect x="3.500" y="3.500" width="6" height="6" fill="none" stroke="#666" stroke-width="0.900" stroke-dasharray="1.500 1"/><path d="M6.500 3 v4" stroke="#333" stroke-width="1.200"/></svg>
<svg class="abs" style="left:655px;top:110px" width="18" height="17" viewBox="0 0 18 17"><path d="M2 2 L8 8" stroke="#3a8ae8" stroke-width="3" stroke-linecap="round"/><path d="M6 6 L14 14" stroke="#8fd0ff" stroke-width="6.500" stroke-linecap="round"/><path d="M6 6 L14 14" stroke="#2a7ad8" stroke-width="6.500" stroke-linecap="round" opacity="0.350"/><path d="M17 2.500 H11 M13 0.500 L10.500 2.500 L13 4.500" fill="none" stroke="#2a5ac8" stroke-width="1.300"/></svg>
<svg class="abs" style="left:678px;top:110px" width="17" height="17" viewBox="0 0 17 17"><path d="M1 4 C1 1 15.500 1 15.500 4 V15 C15.500 12 11 12 11 15 V6 C11 5 5.500 5 5.500 6 V15 C5.500 12 1 12 1 15 Z" fill="#6a9ae0" stroke="#2a4a90" stroke-width="0.900"/><rect x="1.500" y="5" width="3.500" height="10" fill="#f6d030" stroke="#6a5400" stroke-width="0.700"/><rect x="11.500" y="5" width="3.500" height="10" fill="#f6d030" stroke="#6a5400" stroke-width="0.700"/><path d="M2 7 l2.500 1.500 l-2.500 1.500 l2.500 1.500 M12 7 l2.500 1.500 l-2.500 1.500 l2.500 1.500" fill="none" stroke="#333" stroke-width="0.700"/></svg>
<svg class="abs" style="left:701px;top:110px" width="18" height="17" viewBox="0 0 18 17"><path d="M1 5 L5 1 H16.500 V12 L12.500 16 H1 Z" fill="#e8eef8" stroke="#333" stroke-width="0.900"/><rect x="1" y="5" width="11.500" height="11" fill="#5a9ae8" stroke="#2a4a90" stroke-width="0.900"/><path d="M12.500 5 L16.500 1 M5 1 V5" stroke="#333" stroke-width="0.900"/><path d="M8 3 h3 M9.500 1.500 v3 M13 9 h3 M14.500 7.500 v3" stroke="#e02020" stroke-width="1.200"/></svg>
<svg class="abs" style="left:722px;top:116px" width="5" height="3" viewBox="0 0 5 3"><polygon points="0,0 5,0 2.500,3" fill="#4a5068"/></svg>
<svg class="abs" style="left:734px;top:110px" width="18" height="17" viewBox="0 0 18 17"><path d="M1 5 L5 1 H16.500 V12 L12.500 16 H1 Z" fill="#dfe8f6" stroke="#5a6a8a" stroke-width="0.900"/><rect x="1" y="5" width="11.500" height="11" fill="#c8d8f0" stroke="#5a6a8a" stroke-width="0.900"/><path d="M12.500 5 L16.500 1 V12 L12.500 16 Z" fill="#4a8ae0" stroke="#2a4a90" stroke-width="0.900"/><rect x="7" y="5" width="5.500" height="11" fill="#7aaaf0"/></svg>
<svg class="abs" style="left:754px;top:116px" width="5" height="3" viewBox="0 0 5 3"><polygon points="0,0 5,0 2.500,3" fill="#4a5068"/></svg>
<svg class="abs" style="left:766px;top:112px" width="20" height="14" viewBox="0 0 20 14"><circle cx="4.500" cy="8.500" r="3.500" fill="#cfd6e4" fill-opacity="0.500" stroke="#6a7086" stroke-width="1.200"/><circle cx="13.500" cy="9.500" r="3.500" fill="#cfd6e4" fill-opacity="0.500" stroke="#6a7086" stroke-width="1.200"/><path d="M8 8.500 Q9 7 10 9 M1.500 6.500 L5 1 M16 7 L19 3" fill="none" stroke="#6a7086" stroke-width="1.200"/></svg>
<svg class="abs" style="left:788px;top:116px" width="5" height="3" viewBox="0 0 5 3"><polygon points="0,0 5,0 2.500,3" fill="#4a5068"/></svg>
<svg class="abs" style="left:800px;top:110px" width="17" height="17" viewBox="0 0 17 17"><circle cx="8.500" cy="8.500" r="8" fill="#e03030"/><path d="M8.500 8.500 L8.500 0.500 A8 8 0 0 1 16.500 8.500 Z" fill="#3060e0"/><path d="M8.500 8.500 L16.500 8.500 A8 8 0 0 1 3 14.300 Z" fill="#30b030"/><path d="M8.500 8.500 L3 14.300 A8 8 0 0 1 0.500 8.500 Z" fill="#f0c020"/><ellipse cx="6" cy="4.500" rx="3.500" ry="2.200" fill="#fff" opacity="0.450"/></svg>
<svg class="abs" style="left:823px;top:109px" width="18" height="19" viewBox="0 0 18 19"><path d="M0 13 H18 V18 H0 Z" fill="#222"/><path d="M0 13 h3 v2.500 h-3 z M6 13 h3 v2.500 h-3 z M12 13 h3 v2.500 h-3 z M3 15.500 h3 v2.500 h-3 z M9 15.500 h3 v2.500 h-3 z M15 15.500 h3 v2.500 h-3 z" fill="#eee"/><g transform="translate(2,0) scale(0.820)"><circle cx="8.500" cy="8.500" r="8" fill="#e03030"/><path d="M8.500 8.500 L8.500 0.500 A8 8 0 0 1 16.500 8.500 Z" fill="#3060e0"/><path d="M8.500 8.500 L16.500 8.500 A8 8 0 0 1 3 14.300 Z" fill="#30b030"/><path d="M8.500 8.500 L3 14.300 A8 8 0 0 1 0.500 8.500 Z" fill="#f0c020"/><ellipse cx="6" cy="4.500" rx="3.500" ry="2.200" fill="#fff" opacity="0.450"/></g></svg>
<svg class="abs" style="left:843px;top:116px" width="5" height="3" viewBox="0 0 5 3"><polygon points="0,0 5,0 2.500,3" fill="#4a5068"/></svg>
<svg class="abs" style="left:855px;top:109px" width="19" height="19" viewBox="0 0 19 19"><rect x="1" y="3" width="15" height="11" fill="#e6e8ee" stroke="#555" stroke-width="1.100"/><rect x="3" y="5" width="11" height="7" fill="#c9ced8"/><path d="M5 17.500 H12 M8.500 14 V17.500" stroke="#555" stroke-width="1.200"/><path d="M9 5 L13 1 L18 3 L14 8 Z" fill="#f0c890" stroke="#8a6a30" stroke-width="0.800"/></svg>
<svg class="abs" style="left:876px;top:116px" width="5" height="3" viewBox="0 0 5 3"><polygon points="0,0 5,0 2.500,3" fill="#4a5068"/></svg>
<div class="abs" style="left:1211px;top:120px;width:8px;height:3px;background:#e8eaf0;border:1px solid #6a7088;border-top-color:#fff"></div>
<svg class="abs" style="left:1231px;top:112px" width="15" height="13" viewBox="0 0 15 13"><path d="M4 1.500 H13.500 V8 H10.500 M4 1.500 V4.500 M4 3 H13.500" stroke="#eef0f4" stroke-width="1.800" fill="none"/><path d="M1.500 5.500 H10.500 V11.500 H1.500 Z M1.500 7 H10.500" stroke="#eef0f4" stroke-width="1.800" fill="none"/><path d="M4.500 2 H14 V8.500 M2 6 H11 V12" stroke="#5a6078" stroke-width="0.700" fill="none"/></svg>
<svg class="abs" style="left:1255px;top:112px" width="14" height="13" viewBox="0 0 14 13"><path d="M2 1.500 L12 11.500 M12 1.500 L2 11.500" stroke="#5a6078" stroke-width="3.200" stroke-linecap="round"/><path d="M2 1.500 L12 11.500 M12 1.500 L2 11.500" stroke="#d8dbe4" stroke-width="1.800" stroke-linecap="round"/></svg>
<div class="abs" style="left:1256px;top:165px;width:25px;height:22px;border:1px solid #9a9eb0;border-right:none;border-radius:3px 0 0 3px;background:linear-gradient(#cfd2de,#bcc0cf)"></div>
<svg class="abs" style="left:1259px;top:167px" width="18" height="18" viewBox="0 0 18 18"><path d="M1 8 L8.500 1 L16 8 M3 7 V15.500 H14 V7" fill="#f8e060" stroke="#8a6a00" stroke-width="1.200"/><rect x="7" y="10" width="3.500" height="5.500" fill="#fff" stroke="#8a6a00" stroke-width="0.800"/><rect x="11.500" y="2" width="2" height="3.500" fill="#d03020"/></svg>
<div class="abs" style="left:1256px;top:189px;width:25px;height:22px;border:1px solid #9a9eb0;border-right:none;border-radius:3px 0 0 3px;background:linear-gradient(#cfd2de,#bcc0cf)"></div>
<svg class="abs" style="left:1259px;top:191px" width="18" height="18" viewBox="0 0 18 18"><path d="M1 9 L4 7 L7 9 V16 L4 17 L1 15 Z" fill="#30a030" stroke="#104010" stroke-width="0.800"/><path d="M6 6 L9 4 L12 6 V16 L9 17 L6 15 Z" fill="#f0c820" stroke="#6a5400" stroke-width="0.800"/><path d="M11 3 L13.500 1 L16 3 V15 L13.500 16.500 L11 15 Z" fill="#4a7ae0" stroke="#1a3a90" stroke-width="0.800"/></svg>
<div class="abs" style="left:1256px;top:213px;width:25px;height:22px;border:1px solid #9a9eb0;border-right:none;border-radius:3px 0 0 3px;background:linear-gradient(#cfd2de,#bcc0cf)"></div>
<svg class="abs" style="left:1259px;top:215px" width="18" height="18" viewBox="0 0 18 18"><path d="M1 15 V3.500 Q1 2.500 2 2.500 H6 L7.500 4.500 H13 V7" fill="#f8d860" stroke="#c08a10" stroke-width="1"/><path d="M1 15 L4 7 H16.500 L13.500 15 Z" fill="#fce890" stroke="#c08a10" stroke-width="1"/></svg>
<div class="abs" style="left:1256px;top:237px;width:25px;height:22px;border:1px solid #9a9eb0;border-right:none;border-radius:3px 0 0 3px;background:linear-gradient(#cfd2de,#bcc0cf)"></div>
<svg class="abs" style="left:1259px;top:239px" width="18" height="18" viewBox="0 0 18 18"><path d="M1 5 L8 1.500 L15 5 V13 L8 16.500 L1 13 Z" fill="#d02828" stroke="#801010" stroke-width="0.800"/><path d="M1 5 L8 8.500 L15 5 M8 8.500 V16.500" stroke="#f08080" stroke-width="0.800" fill="none"/><text x="2" y="13" font-size="6" font-weight="bold" fill="#fff" font-family="Liberation Sans,sans-serif">S</text><path d="M10 9 L16.500 16" stroke="#4a8ae0" stroke-width="2.200"/><circle cx="10.500" cy="9" r="2.500" fill="#e0e8f4" stroke="#666" stroke-width="0.800"/></svg>
<div class="abs" style="left:1256px;top:261px;width:25px;height:22px;border:1px solid #9a9eb0;border-right:none;border-radius:3px 0 0 3px;background:linear-gradient(#cfd2de,#bcc0cf)"></div>
<svg class="abs" style="left:1259px;top:263px" width="18" height="18" viewBox="0 0 18 18"><rect x="1.500" y="1" width="15" height="10.500" fill="#f2f4f8" stroke="#444" stroke-width="1"/><rect x="3" y="2.500" width="6" height="3" fill="#3a6ad8"/><rect x="10.500" y="2.500" width="4.500" height="3" fill="#7a9ae0"/><rect x="3" y="7" width="6" height="3" fill="#f0c020"/><rect x="10.500" y="7" width="4.500" height="3" fill="#7a9ae0"/><path d="M1 15 H7 M4.500 12.500 L7.500 15 L4.500 17.500" stroke="#1a2ab0" stroke-width="1.500" fill="none"/></svg>
<div class="abs" style="left:1256px;top:285px;width:25px;height:22px;border:1px solid #9a9eb0;border-right:none;border-radius:3px 0 0 3px;background:linear-gradient(#f4f5f9,#e2e4ec)"></div>
<svg class="abs" style="left:1259px;top:287px" width="18" height="18" viewBox="0 0 18 18"><g transform="translate(1,1) scale(0.940)"><circle cx="8.500" cy="8.500" r="8" fill="#e03030"/><path d="M8.500 8.500 L8.500 0.500 A8 8 0 0 1 16.500 8.500 Z" fill="#3060e0"/><path d="M8.500 8.500 L16.500 8.500 A8 8 0 0 1 3 14.300 Z" fill="#30b030"/><path d="M8.500 8.500 L3 14.300 A8 8 0 0 1 0.500 8.500 Z" fill="#f0c020"/><ellipse cx="6" cy="4.500" rx="3.500" ry="2.200" fill="#fff" opacity="0.450"/></g></svg>
<div class="abs" style="left:1256px;top:309px;width:25px;height:22px;border:1px solid #9a9eb0;border-right:none;border-radius:3px 0 0 3px;background:linear-gradient(#cfd2de,#bcc0cf)"></div>
<svg class="abs" style="left:1259px;top:311px" width="18" height="18" viewBox="0 0 18 18"><rect x="2.500" y="5" width="11" height="11.500" fill="#f8f8f8" stroke="#555" stroke-width="1"/><path d="M4.500 8.500 H11.500 M4.500 11 H11.500 M4.500 13.500 H11.500" stroke="#888" stroke-width="0.900"/><path d="M6 5 L11 1.500 L17 3.500 L13 7.500 L9 7 Z" fill="#f0c080" stroke="#8a5a20" stroke-width="0.800"/></svg>
<svg class="abs" style="left:225px;top:600px" width="65" height="65" viewBox="225 600 65 65"><path d="M258.500 641 V624" stroke="#1e7a2a" stroke-width="4.200"/><polygon points="258.500,616 253,625.500 264,625.500" fill="#2a8a34"/><path d="M258.500 640.500 L244 649" stroke="#2222b8" stroke-width="4.200"/><polygon points="236,653.500 243.500,644.500 247.500,652.500" fill="#3434e8"/><path d="M258.500 640.500 L272 648.500" stroke="#b01c1c" stroke-width="4.200"/><polygon points="280,653 269.500,653 273,645" fill="#e83a3a"/><text x="254.500" y="616" font-family="Liberation Serif,serif" font-size="10" font-weight="bold" fill="#1e8a2a">Y</text><text x="230.500" y="659.500" font-family="Liberation Serif,serif" font-size="10" font-weight="bold" fill="#2020d0">Z</text><text x="277.500" y="659.500" font-family="Liberation Serif,serif" font-size="10" font-weight="bold" fill="#e03030">X</text></svg>
<div class="t" style="left:230px;top:684px;font-size:12px;font-weight:bold;letter-spacing:1.5px;color:#2a2c62;font-family:'Liberation Sans','Noto Sans CJK SC',sans-serif"><span style="font-size:14px;position:relative;top:3px;line-height:0">*</span>等轴测</div>
<div class="abs" id="rstrip" style="left:1278px;top:104px;width:2px;height:594px;background:rgba(255,255,255,.2)"></div>
<!-- MENUBAR -->
<div id="menubar" class="abs"></div>
<div id="logoDiv" class="abs"></div>
<div id="qbar" class="abs"></div>
<!-- SW logo cube -->
<svg class="abs" style="left:3px;top:3px" width="23" height="23" viewBox="0 0 23 23">
<polygon points="11,1 21,4 21,17 11,21 1,17 1,4" fill="#c8242a"/>
<polygon points="11,1 21,4 11,8 1,4" fill="#e65a55"/>
<polygon points="11,8 21,4 21,17 11,21" fill="#a81a20"/>
<polygon points="1,4 11,8 11,21 1,17" fill="#d02a2e"/>
<text x="2.300" y="15.600" font-family="Liberation Sans,sans-serif" font-weight="bold" font-size="11.500" fill="#fff" transform="skewY(10)" style="letter-spacing:-0.3px">S</text>
<text x="10.800" y="18.800" font-family="Liberation Sans,sans-serif" font-weight="bold" font-size="10.500" fill="#fff" transform="skewY(-12)" textLength="9.500" lengthAdjust="spacingAndGlyphs">W</text>
</svg>
<div class="t" id="swtxt" style="left:28px;top:6px;font-size:18px;letter-spacing:0.6px;color:#26262e;font-family:'Liberation Sans',sans-serif;transform:scaleX(0.88);transform-origin:0 0;background:linear-gradient(#6a6a78 15%,#1a1a22 60%,#050508 90%);-webkit-background-clip:text;background-clip:text;-webkit-text-fill-color:transparent"><b>Solid</b><span>Works</span></div>
<div class="t menu" style="left:143px">文件(F)</div>
<div class="t menu" style="left:197px">编辑(E)</div>
<div class="t menu" style="left:251px">视图(V)</div>
<div class="t menu" style="left:305px">插入(I)</div>
<div class="t menu" style="left:358px">工具(T)</div>
<div class="t menu" style="left:411px;font-size:11px;top:11px">Toolbox</div>
<div class="t menu" style="left:465px;font-size:11px;top:11px">PhotoWorks</div>
<div class="t menu" style="left:540px">窗口(W)</div>
<div class="t menu" style="left:597px">帮助(H)</div>
<!-- quick toolbar -->
<svg class="abs" style="left:650px;top:6px" width="17" height="17" viewBox="0 0 17 17">
<defs><radialGradient id="gpin" cx="0.4" cy="0.35" r="0.7"><stop offset="0" stop-color="#ffffff"/><stop offset="0.5" stop-color="#c9cad4"/><stop offset="1" stop-color="#6e7080"/></radialGradient></defs>
<path d="M7 9.500 L2 15" stroke="#44464f" stroke-width="1.500"/>
<path d="M4 9 C6 12.500 11 12.500 13.500 10" stroke="#7c7e8c" stroke-width="1.600" fill="none"/>
<ellipse cx="9.500" cy="6.500" rx="5" ry="4.600" fill="url(#gpin)" stroke="#7a7c8a" stroke-width="0.600"/>
</svg>
<svg class="abs" style="left:677px;top:6px" width="15" height="18" viewBox="0 0 15 18">
<defs><linearGradient id="gdoc" x1="0" y1="0" x2="1" y2="1"><stop offset="0" stop-color="#fff"/><stop offset="1" stop-color="#d3d8e6"/></linearGradient></defs>
<path d="M1 1 H9.5 L14 5.5 V17 H1 Z" fill="url(#gdoc)" stroke="#8d93a8" stroke-width="1"/>
<path d="M9.5 1 V5.5 H14" fill="#eef0f6" stroke="#8d93a8" stroke-width="1"/>
</svg>
<svg class="abs" style="left:700px;top:15px" width="6" height="3" viewBox="0 0 6 3"><polygon points="0,0 6,0 3,3" fill="#2a2c3c"/></svg>
<svg class="abs" style="left:712px;top:6px" width="19" height="18" viewBox="0 0 19 18">
<path d="M1.5 16 V4.5 Q1.5 3.5 2.5 3.5 H6 L7.5 5 H13 V8" fill="#f7d25c" stroke="#c99a1c" stroke-width="1"/>
<path d="M1.5 16 L4.5 8 H16.5 L13.5 16 Z" fill="#fbe28a" stroke="#c99a1c" stroke-width="1"/>
<path d="M9 2.5 C12 1 15 2.5 15 5.5 L17 5.5 L13.7 9 L10.5 5.5 L12.6 5.5 C12.6 3.8 11 3 9 2.5 Z" fill="#35b934" stroke="#1d8a1f" stroke-width="0.7"/>
</svg>
<svg class="abs" style="left:736px;top:15px" width="6" height="3" viewBox="0 0 6 3"><polygon points="0,0 6,0 3,3" fill="#2a2c3c"/></svg>
<svg class="abs" style="left:748px;top:6px" width="18" height="18" viewBox="0 0 18 18">
<rect x="1" y="1" width="16" height="16" rx="1.5" fill="#2f5fd0" stroke="#1b3fa0" stroke-width="1"/>
<rect x="3.5" y="1.5" width="11" height="7.5" fill="#f4f5f8"/>
<path d="M4.5 3.5 H13.5 M4.5 5.5 H13.5 M4.5 7.5 H13.5" stroke="#b9bdc9" stroke-width="0.8"/>
<rect x="5" y="11" width="8" height="6" fill="#1a2f7a"/>
<rect x="9.5" y="12" width="2.5" height="4.5" fill="#dfe3ee"/>
</svg>
<svg class="abs" style="left:772px;top:15px" width="6" height="3" viewBox="0 0 6 3"><polygon points="0,0 6,0 3,3" fill="#2a2c3c"/></svg>
<svg class="abs" style="left:783px;top:6px" width="20" height="19" viewBox="0 0 20 19">
<path d="M5 9 L3.5 1.5 H11 L14 8" fill="#cfe3f7" stroke="#8aa7c9" stroke-width="0.8"/>
<path d="M1.5 9.5 L6 7.5 H16 L18.5 10 V15 L15 17.5 H4 L1.5 15 Z" fill="#e9e9ec" stroke="#70727c" stroke-width="1"/>
<path d="M1.5 11.5 H18.5" stroke="#9c9ea8" stroke-width="0.8"/>
<path d="M4.5 13.5 H15.5 V16.5 H4.5 Z" fill="#fff" stroke="#55575f" stroke-width="0.8"/>
<path d="M6 15 H14" stroke="#333" stroke-width="1"/>
</svg>
<svg class="abs" style="left:808px;top:15px" width="6" height="3" viewBox="0 0 6 3"><polygon points="0,0 6,0 3,3" fill="#2a2c3c"/></svg>
<svg class="abs" style="left:819px;top:6px" width="20" height="19" viewBox="0 0 20 19">
<path d="M2 2 L2.8 10.5 L5.6 8.2 C9 5.5 13.5 6.5 13.5 10 C13.5 13 11 15 8.5 16.5 L10.5 17.5 C15 16 18.2 13 17.6 8.5 C17 3.5 11 1.5 7 5 L5 6.5 Z" fill="#3d7ee0" stroke="#1f4fb2" stroke-width="0.9" stroke-linejoin="round"/>
</svg>
<svg class="abs" style="left:844px;top:15px" width="6" height="3" viewBox="0 0 6 3"><polygon points="0,0 6,0 3,3" fill="#2a2c3c"/></svg>
<div class="abs" style="left:854px;top:4px;width:36px;height:23px;border:1px solid #7e8299;border-radius:4px;background:linear-gradient(90deg,#bcbfdd 0,#bcbfdd 21px,#8e92aa 21px,#8e92aa 22px,#e9eaf3 22px)"></div>
<svg class="abs" style="left:859px;top:7px" width="13" height="17" viewBox="0 0 13 17">
<path d="M1.5 1 L1.5 13 L4.5 10.3 L6.8 15.5 L8.8 14.6 L6.5 9.6 L10.5 9.4 Z" fill="#fff" stroke="#222" stroke-width="1" stroke-linejoin="round"/>
</svg>
<svg class="abs" style="left:879px;top:15px" width="6" height="3" viewBox="0 0 6 3"><polygon points="0,0 6,0 3,3" fill="#2a2c3c"/></svg>
<svg class="abs" style="left:896px;top:6px" width="11" height="19" viewBox="0 0 11 19">
<rect x="1" y="1" width="9" height="17" rx="4" fill="#2b2b2b"/>
<circle cx="5.5" cy="5.5" r="2.8" fill="#e02020"/>
<circle cx="5.5" cy="12.5" r="2.8" fill="#22b322"/>
</svg>
<svg class="abs" style="left:915px;top:6px" width="18" height="18" viewBox="0 0 18 18">
<rect x="1" y="1" width="16" height="15.5" fill="#f2f4f8" stroke="#7a8096" stroke-width="1"/>
<rect x="3.5" y="3.5" width="2.5" height="2.5" fill="none" stroke="#444" stroke-width="0.8"/>
<rect x="3.5" y="7.5" width="2.5" height="2.5" fill="none" stroke="#444" stroke-width="0.8"/>
<path d="M8 4.7 H14.5 M8 8.7 H14.5 M9 12.7 H14.5" stroke="#555" stroke-width="1"/>
<path d="M3 12.5 L4.8 14.3 L8 11.2" stroke="#1aa21a" stroke-width="1.6" fill="none"/>
</svg>
<svg class="abs" style="left:938px;top:15px" width="6" height="3" viewBox="0 0 6 3"><polygon points="0,0 6,0 3,3" fill="#2a2c3c"/></svg>
<div class="t" style="left:951px;top:10px;font-size:11px;color:#333">4...</div>
<div class="abs" style="left:978px;top:4px;width:193px;height:22px;border:1px solid #8e92a6;border-radius:11px;background:linear-gradient(#e4e6ee 0,#ffffff 40%,#ffffff 100%);box-shadow:inset 0 1px 2px rgba(90,95,120,.45)"></div>
<svg class="abs" style="left:973px;top:3px" width="23" height="25" viewBox="0 0 23 25">
<circle cx="9" cy="9.5" r="6.5" fill="#f3f6fb" stroke="#8b90a0" stroke-width="1.6"/>
<path d="M6 6.5 A4.5 4.5 0 0 0 5 10" stroke="#fff" stroke-width="1.4" fill="none"/>
<path d="M13.5 14.5 L19.5 21" stroke="#3f86d8" stroke-width="3" stroke-linecap="round"/>
<path d="M13.5 14.5 L19.5 21" stroke="#8fc2f3" stroke-width="1" stroke-linecap="round"/>
</svg>
<svg class="abs" style="left:994px;top:13px" width="6" height="3" viewBox="0 0 6 3"><polygon points="0,0 6,0 3,3" fill="#2a2c3c"/></svg>
<div class="t" style="left:1003px;top:9px;font-size:12px;color:#000"><span style="font-size:11px">SolidWorks </span>搜索</div>
<div class="t" style="left:1179px;top:7px;font-size:14px;font-weight:bold;color:#8f92a0">?</div>
<svg class="abs" style="left:1197px;top:14px" width="6" height="3" viewBox="0 0 6 3"><polygon points="0,0 6,0 3,3" fill="#4a4c5c"/></svg>
<div class="abs" style="left:1214px;top:16px;width:9px;height:3px;background:#9a9caa;border-radius:1px"></div>
<svg class="abs" style="left:1235px;top:9px" width="14" height="13" viewBox="0 0 14 13"><path d="M4 1.500 H12.500 V7.500 H10 M4 1.500 V4 M4 2.800 H12.500" stroke="#a0a3b2" stroke-width="1.500" fill="none"/><path d="M1.500 5 H10 V11 H1.500 Z M1.500 6.300 H10" stroke="#a0a3b2" stroke-width="1.500" fill="none"/></svg>
<svg class="abs" style="left:1258px;top:9px" width="14" height="13" viewBox="0 0 14 13"><path d="M2.500 2 L11.500 11 M11.500 2 L2.500 11" stroke="#a6a8b6" stroke-width="2.400" stroke-linecap="round"/></svg>
<!-- RIBBON -->
<div id="ribbon" class="abs"></div>
<svg width="0" height="0" style="position:absolute"><defs>
<linearGradient id="gy" x1="0" y1="0" x2="1" y2="1"><stop offset="0" stop-color="#fff9a8"/><stop offset="0.5" stop-color="#f7d83a"/><stop offset="1" stop-color="#e0a800"/></linearGradient>
<linearGradient id="gyv" x1="0" y1="0" x2="0" y2="1"><stop offset="0" stop-color="#fff9a8"/><stop offset="1" stop-color="#e9b800"/></linearGradient>
<linearGradient id="gg" x1="0" y1="0" x2="1" y2="1"><stop offset="0" stop-color="#8df08a"/><stop offset="0.5" stop-color="#2fc02f"/><stop offset="1" stop-color="#128a14"/></linearGradient>
</defs></svg>
<svg class="abs" style="left:24px;top:44px" width="17" height="17" viewBox="0 0 17 17"><path d="M1 1.5 H11 L15 5 V15.5 H5 L1 12 Z" fill="url(#gy)" stroke="#6a5400" stroke-width="1" stroke-linejoin="round"/><path d="M1 1.5 L5 5 H15 M5 5 V15.5" fill="none" stroke="#6a5400" stroke-width="1" stroke-linejoin="round"/><rect x="5" y="5" width="10" height="10.5" fill="#f9dc4a" stroke="#6a5400" stroke-width="1" stroke-linejoin="round"/><path d="M1 1.5 H11 L15 5 H5 Z" fill="#fff7a0" stroke="#6a5400" stroke-width="1" stroke-linejoin="round"/><path d="M7 7.5 L10 5.5 L15 9.5 L12 11.5 Z" fill="#2fb52f" stroke="#0f7a12" stroke-width="0.8" stroke-linejoin="round"/><rect x="11" y="11" width="5.5" height="5.5" fill="#3fd03f" stroke="#0f7a12" stroke-width="0.8" stroke-linejoin="round"/><path d="M7 7.5 L11 11 M10 5.5 L16 11" stroke="#0f7a12" stroke-width="0.8"/></svg>
<div class="t rl" style="left:2px;top:62px;width:60px">拉伸凸<br>台/基体</div>
<svg class="abs" style="left:74px;top:43px" width="17" height="17" viewBox="0 0 17 17"><path d="M1.5 10 C1.5 5 6 4 8.5 4 C11 4 15.5 5 15.5 10 C15.5 13 11 13 11 10 C11 8.5 6 8.5 6 10 C6 13 1.5 13 1.5 10 Z" fill="url(#gyv)" stroke="#6a5400" stroke-width="1" stroke-linejoin="round"/><ellipse cx="3.7" cy="10.3" rx="1.6" ry="1.8" fill="#fff7a0" stroke="#6a5400" stroke-width="1" stroke-linejoin="round"/><ellipse cx="13.3" cy="10.3" rx="1.6" ry="1.8" fill="#fff7a0" stroke="#6a5400" stroke-width="1" stroke-linejoin="round"/><path d="M8.5 0 V17" stroke="#222" stroke-width="1" stroke-dasharray="3 1.5"/></svg>
<div class="t rl" style="left:52px;top:62px;width:60px">旋转凸<br>台/基体</div>
<svg class="abs" style="left:108px;top:35px" width="17" height="17" viewBox="0 0 17 17"><path d="M15 2.5 C15.8 2.5 16 6.5 15 6.5 H9 C6 6.5 6 10.5 9 10.5 H15 C16 10.5 16 14.5 15 14.5 H8 C-1 14.5 -1 2.5 8 2.5 Z" fill="url(#gyv)" stroke="#6a5400" stroke-width="1" stroke-linejoin="round"/><ellipse cx="14.6" cy="4.5" rx="1.3" ry="2" fill="#fff7a0" stroke="#6a5400" stroke-width="1" stroke-linejoin="round"/><ellipse cx="14.6" cy="12.5" rx="1.3" ry="2" fill="#fff7a0" stroke="#6a5400" stroke-width="1" stroke-linejoin="round"/></svg>
<div class="t rl" style="left:131px;top:38px;text-align:left">扫描</div>
<svg class="abs" style="left:108px;top:58px" width="17" height="17" viewBox="0 0 17 17"><path d="M5.5 2.5 C5.5 8 4 10 1 13.5 L8 16 L15 13.5 C12 10 10.5 8 10.5 2.5 Z" fill="url(#gy)" stroke="#6a5400" stroke-width="1" stroke-linejoin="round"/><ellipse cx="8" cy="2.6" rx="2.5" ry="1.3" fill="#fff7a0" stroke="#6a5400" stroke-width="1" stroke-linejoin="round"/></svg>
<div class="t rl" style="left:131px;top:61px;text-align:left">放样凸台/基体</div>
<svg class="abs" style="left:108px;top:81px" width="17" height="17" viewBox="0 0 17 17"><path d="M1 5.5 L5 9 V15.5 H15.5 V7 L12 2 L9.5 4.5 H6.5 L1 5.5 Z" fill="url(#gy)" stroke="#6a5400" stroke-width="1" stroke-linejoin="round"/><path d="M1 5.5 V11.5 L5 15.5 V9 Z" fill="#f1c820" stroke="#6a5400" stroke-width="1" stroke-linejoin="round"/><path d="M5 9 H15.5" fill="none" stroke="#6a5400" stroke-width="1" stroke-linejoin="round"/><path d="M1 5.5 H7 L9 6.5 L12 2" fill="none" stroke="#6a5400" stroke-width="1" stroke-linejoin="round"/></svg>
<div class="t rl" style="left:131px;top:84px;text-align:left">边界凸台/基体</div>
<div class="abs sep" style="left:218px"></div>
<svg class="abs" style="left:236px;top:44px" width="17" height="17" viewBox="0 0 17 17"><path d="M1 1.5 H11 L15 5 V15.5 H5 L1 12 Z" fill="url(#gy)" stroke="#6a5400" stroke-width="1" stroke-linejoin="round"/><path d="M1 1.5 L5 5 H15 M5 5 V15.5" fill="none" stroke="#6a5400" stroke-width="1" stroke-linejoin="round"/><rect x="5" y="5" width="10" height="10.5" fill="#f9dc4a" stroke="#6a5400" stroke-width="1" stroke-linejoin="round"/><path d="M1 1.5 H11 L15 5 H5 Z" fill="#fff7a0" stroke="#6a5400" stroke-width="1" stroke-linejoin="round"/><rect x="7.5" y="7.5" width="6" height="6" fill="#2fb52f" stroke="#0f7a12" stroke-width="0.8" stroke-linejoin="round"/><rect x="8" y="8" width="3" height="2.5" fill="#c8f5c0"/></svg>
<div class="t rl" style="left:214px;top:62px;width:60px">拉伸切<br>除</div>
<svg class="abs" style="left:282px;top:43px" width="17" height="17" viewBox="0 0 17 17"><rect x="2" y="6" width="11" height="10" fill="url(#gy)" stroke="#6a5400" stroke-width="1" stroke-linejoin="round"/><path d="M2 6 L4 4 H15 L13 6 Z" fill="#fff7a0" stroke="#6a5400" stroke-width="1" stroke-linejoin="round"/><path d="M13 6 L15 4 V14 L13 16 Z" fill="#e0a800" stroke="#6a5400" stroke-width="1" stroke-linejoin="round"/><circle cx="7.5" cy="11" r="2.8" fill="#3cc83c" stroke="#0f7a12" stroke-width="0.8" stroke-linejoin="round"/><circle cx="6.8" cy="10.3" r="1" fill="#d8ffd0"/><path d="M10 0.5 L17 7.5" stroke="#111" stroke-width="2.2"/><path d="M10.8 1.3 L16.4 6.9" stroke="#ddd" stroke-width="0.6" stroke-dasharray="1 1"/><path d="M3 2 h1.6 M3.8 1.2 v1.6 M7 2.5 h1.6 M7.8 1.7 v1.6 M14.5 0.6 h1.6 M15.3 -0.2 v1.6" stroke="#e03010" stroke-width="0.9"/></svg>
<div class="t rl" style="left:260px;top:62px;width:60px">异型孔<br>向导</div>
<svg class="abs" style="left:327px;top:44px" width="17" height="17" viewBox="0 0 17 17"><path d="M1 5 V12.5 C1 14.5 4.5 16 8.5 16 C12.500 16 16 14.5 16 12.500 V5 Z" fill="url(#gyv)" stroke="#6a5400" stroke-width="1" stroke-linejoin="round"/><ellipse cx="8.5" cy="5" rx="7.5" ry="3" fill="#fff38a" stroke="#6a5400" stroke-width="1" stroke-linejoin="round"/><path d="M5 15.500 V7.500 L8.5 4.500 L12 7.500 V15.500 L10 13 V9 H7 V13 Z" fill="url(#gg)" stroke="#0f7a12" stroke-width="0.8" stroke-linejoin="round"/></svg>
<div class="t rl" style="left:306px;top:62px;width:60px">旋转切<br>除</div>
<svg class="abs" style="left:360px;top:35px" width="17" height="17" viewBox="0 0 17 17"><path d="M1 1.5 H11 L15 5 V15.5 H5 L1 12 Z" fill="url(#gy)" stroke="#6a5400" stroke-width="1" stroke-linejoin="round"/><path d="M1 1.5 L5 5 H15 M5 5 V15.5" fill="none" stroke="#6a5400" stroke-width="1" stroke-linejoin="round"/><rect x="5" y="5" width="10" height="10.5" fill="#f9dc4a" stroke="#6a5400" stroke-width="1" stroke-linejoin="round"/><path d="M1 1.5 H11 L15 5 H5 Z" fill="#fff7a0" stroke="#6a5400" stroke-width="1" stroke-linejoin="round"/><path d="M15 7.500 H10 C6.500 7.500 6.500 13.500 10 13.500 H15 V11.500 H10.500 C9.300 11.500 9.300 9.500 10.500 9.500 H15 Z" fill="#22a822" stroke="#0f7a12" stroke-width="0.8" stroke-linejoin="round"/></svg>
<div class="t rl" style="left:384px;top:38px;text-align:left">扫描切除</div>
<svg class="abs" style="left:360px;top:58px" width="17" height="17" viewBox="0 0 17 17"><path d="M1 2.5 H12 L15.5 5 V16 L12 13.5 H1 Z" fill="url(#gy)" stroke="#6a5400" stroke-width="1" stroke-linejoin="round"/><path d="M12 2.5 V13.5" stroke="#6a5400" stroke-width="1"/><path d="M6.5 3 C6.5 8 5.5 11 3 14.500 L8 13 L13 16.500 C10.5 12 9.5 8 9.500 3 Z" fill="url(#gg)" stroke="#0f7a12" stroke-width="0.8" stroke-linejoin="round"/></svg>
<div class="t rl" style="left:384px;top:61px;text-align:left">放样切割</div>
<svg class="abs" style="left:360px;top:81px" width="17" height="17" viewBox="0 0 17 17"><path d="M1 7 L4 4.500 H8 L7.500 2.500 L12 1.500 L16 5 V15.500 H4.500 L1 12.500 Z" fill="url(#gy)" stroke="#6a5400" stroke-width="1" stroke-linejoin="round"/><path d="M1 7 L4.500 9.500 H16 M4.500 9.500 V15.500" fill="none" stroke="#6a5400" stroke-width="1" stroke-linejoin="round"/><path d="M2 6.500 L5 4.500 H10 V3 L15 5.500 L10.500 8.500 V7 H5.500 Z" fill="url(#gg)" stroke="#0f7a12" stroke-width="0.8" stroke-linejoin="round"/></svg>
<div class="t rl" style="left:384px;top:84px;text-align:left">边界切除</div>
<div class="abs sep" style="left:442px"></div>
<svg class="abs" style="left:453px;top:36px" width="17" height="17" viewBox="0 0 17 17"><path d="M1.500 9 L5 12 V16 H15.500 V8 L12 4.500 Z" fill="url(#gy)" stroke="#6a5400" stroke-width="1" stroke-linejoin="round"/><path d="M5 12 H15.500 M1.500 9 V13 L5 16" fill="none" stroke="#6a5400" stroke-width="1" stroke-linejoin="round"/><path d="M1.500 9 C1.500 3 6 1 12 1.500 L15.500 5 C10 4.500 5.500 6 5 12 Z" fill="url(#gg)" stroke="#0f7a12" stroke-width="0.8" stroke-linejoin="round"/></svg>
<div class="t rl" style="left:432px;top:55px;width:60px">圆角</div>
<svg class="abs" style="left:459px;top:92px" width="5" height="3" viewBox="0 0 5 3"><polygon points="0,0 5,0 2.5,3" fill="#3a3c4c"/></svg>
<svg class="abs" style="left:493px;top:36px" width="17" height="17" viewBox="0 0 17 17"><rect x="1" y="0.5" width="4" height="7" rx="2" fill="#2fb52f" stroke="#0f7a12" stroke-width="0.8"/><ellipse cx="3" cy="2.1" rx="1.5" ry="1" fill="#9cf09a"/><rect x="7" y="0.5" width="4" height="7" rx="2" fill="#2fb52f" stroke="#0f7a12" stroke-width="0.8"/><ellipse cx="9" cy="2.1" rx="1.5" ry="1" fill="#9cf09a"/><rect x="13" y="0.5" width="4" height="7" rx="2" fill="#2fb52f" stroke="#0f7a12" stroke-width="0.8"/><ellipse cx="15" cy="2.1" rx="1.5" ry="1" fill="#9cf09a"/><rect x="1" y="8.5" width="4" height="7" rx="2" fill="#f3c81e" stroke="#6a5400" stroke-width="0.8"/><ellipse cx="3" cy="10.1" rx="1.5" ry="1" fill="#fff7a0"/><rect x="7" y="8.5" width="4" height="7" rx="2" fill="#2fb52f" stroke="#0f7a12" stroke-width="0.8"/><ellipse cx="9" cy="10.1" rx="1.5" ry="1" fill="#9cf09a"/><rect x="13" y="8.5" width="4" height="7" rx="2" fill="#2fb52f" stroke="#0f7a12" stroke-width="0.8"/><ellipse cx="15" cy="10.1" rx="1.5" ry="1" fill="#9cf09a"/></svg>
<div class="t rl" style="left:472px;top:55px;width:60px">线性阵<br>列</div>
<svg class="abs" style="left:499px;top:92px" width="5" height="3" viewBox="0 0 5 3"><polygon points="0,0 5,0 2.5,3" fill="#3a3c4c"/></svg>
<svg class="abs" style="left:526px;top:35px" width="17" height="17" viewBox="0 0 17 17"><path d="M1 10.500 L5 8.500 L9 1.500 L15.500 7 V14 L8 16.500 L1 12.500 Z" fill="url(#gy)" stroke="#6a5400" stroke-width="1" stroke-linejoin="round"/><path d="M1 10.500 L8 14 L15.500 11 M8 14 V16.500" fill="none" stroke="#6a5400" stroke-width="1" stroke-linejoin="round"/><path d="M4 9.500 L9 3.500 L12.500 7 V10 L8 12 Z" fill="url(#gg)" stroke="#0f7a12" stroke-width="0.8" stroke-linejoin="round"/></svg>
<div class="t rl" style="left:550px;top:38px;text-align:left">筋</div>
<svg class="abs" style="left:526px;top:58px" width="17" height="17" viewBox="0 0 17 17"><path d="M1 2 L9 1 L16 8 V15.500 H9.500 L1 9 Z" fill="url(#gg)" stroke="#0f7a12" stroke-width="0.8" stroke-linejoin="round"/><path d="M1 2 L9.500 9 H16 M9.500 9 V15.500" fill="none" stroke="#0f7a12" stroke-width="0.8" stroke-linejoin="round"/><rect x="9.500" y="9" width="6.500" height="6.500" fill="#f7d83a" stroke="#6a5400" stroke-width="1" stroke-linejoin="round"/></svg>
<div class="t rl" style="left:550px;top:61px;text-align:left">拔模</div>
<svg class="abs" style="left:526px;top:81px" width="17" height="17" viewBox="0 0 17 17"><path d="M1 1.5 H11 L15 5 V15.5 H5 L1 12 Z" fill="url(#gy)" stroke="#6a5400" stroke-width="1" stroke-linejoin="round"/><path d="M1 1.5 L5 5 H15 M5 5 V15.5" fill="none" stroke="#6a5400" stroke-width="1" stroke-linejoin="round"/><rect x="5" y="5" width="10" height="10.5" fill="#f9dc4a" stroke="#6a5400" stroke-width="1" stroke-linejoin="round"/><path d="M1 1.5 H11 L15 5 H5 Z" fill="#fff7a0" stroke="#6a5400" stroke-width="1" stroke-linejoin="round"/><rect x="5" y="5" width="10" height="10.500" fill="url(#gg)" stroke="#0f7a12" stroke-width="0.8" stroke-linejoin="round"/><rect x="7" y="6.500" width="6" height="5" fill="#1c961e"/></svg>
<div class="t rl" style="left:550px;top:84px;text-align:left">抽壳</div>
<svg class="abs" style="left:585px;top:35px" width="17" height="17" viewBox="0 0 17 17"><path d="M1 4 V13 C1 15 4.500 16.500 8.500 16.500 C12.500 16.500 16 15 16 13 V4 Z" fill="url(#gyv)" stroke="#6a5400" stroke-width="1" stroke-linejoin="round"/><ellipse cx="8.500" cy="4" rx="7.500" ry="2.800" fill="#fff38a" stroke="#6a5400" stroke-width="1" stroke-linejoin="round"/><rect x="3" y="8" width="11" height="6" fill="#2fb52f" stroke="#0f7a12" stroke-width="0.8" stroke-linejoin="round"/><text x="4" y="13.300" font-family="Liberation Sans,sans-serif" font-size="6.500" font-weight="bold" fill="#e8ffe0">SD</text></svg>
<div class="t rl" style="left:609px;top:38px;text-align:left">包覆</div>
<svg class="abs" style="left:585px;top:58px" width="17" height="17" viewBox="0 0 17 17"><path d="M1.500 8 V13.500 C1.500 15.500 5 16.500 8.500 16.500 C12 16.500 15.500 15.500 15.500 13.500 V8 Z" fill="url(#gyv)" stroke="#6a5400" stroke-width="1" stroke-linejoin="round"/><path d="M1.500 8 C1.500 -1 15.500 -1 15.500 8 C15.500 10.500 1.500 10.500 1.500 8 Z" fill="url(#gg)" stroke="#0f7a12" stroke-width="0.8" stroke-linejoin="round"/></svg>
<div class="t rl" style="left:609px;top:61px;text-align:left">圆顶</div>
<svg class="abs" style="left:585px;top:81px" width="17" height="17" viewBox="0 0 17 17"><path d="M1 1.500 H5 V8 H8 V11 L16 12 V15 L12 16.500 L1 13 Z" fill="url(#gy)" stroke="#6a5400" stroke-width="1" stroke-linejoin="round"/><path d="M5 8 L7 10 V13 M1 11 L5 12.500" fill="none" stroke="#6a5400" stroke-width="1" stroke-linejoin="round"/><path d="M9 4 L12 2 L15.500 3 V11.500 L12 10.500 L9 11 Z" fill="url(#gg)" stroke="#0f7a12" stroke-width="0.8" stroke-linejoin="round"/><path d="M12 2 V10.500" stroke="#0f7a12" stroke-width="0.8"/></svg>
<div class="t rl" style="left:609px;top:84px;text-align:left">镜向</div>
<div class="abs sep" style="left:643px"></div>
<svg class="abs" style="left:659px;top:37px" width="17" height="17" viewBox="0 0 17 17"><path d="M2 6.500 L8 1.500 L14 8 L8 13 Z" fill="#f7e23a" stroke="#b89a00" stroke-width="1"/><path d="M6.500 6 L9.500 9" stroke="#222" stroke-width="1.200"/><path d="M0 1 L3 4 M11 12 L14 16" stroke="#118811" stroke-width="1.300"/><path d="M13.500 0 V6 M10.500 3 H16.500 M11.500 1 L15.500 5 M15.500 1 L11.500 5" stroke="#159915" stroke-width="1"/></svg>
<div class="t rl" style="left:638px;top:55px;width:60px">参考几<br>何体</div>
<svg class="abs" style="left:666px;top:92px" width="5" height="3" viewBox="0 0 5 3"><polygon points="0,0 5,0 2.5,3" fill="#3a3c4c"/></svg>
<svg class="abs" style="left:699px;top:36px" width="17" height="17" viewBox="0 0 17 17"><path d="M15.500 1.500 C12.500 1.500 12.500 4 12.500 6.500 C12.500 10 11 13.500 7.500 14.500 C4 15.500 1.500 13 2 9.500 C2.500 6.500 6.500 6 7 9 C7.300 10.500 6.500 11.500 5.500 11.500" fill="none" stroke="#0a7a10" stroke-width="2.600" stroke-linecap="round"/><path d="M15.500 1.500 C12.500 1.500 12.500 4 12.500 6.500 C12.500 10 11 13.500 7.500 14.500 C4 15.500 1.500 13 2 9.500" fill="none" stroke="#35c035" stroke-width="0.900" stroke-linecap="round"/></svg>
<div class="t rl" style="left:679px;top:55px;width:60px">曲线</div>
<svg class="abs" style="left:706px;top:92px" width="5" height="3" viewBox="0 0 5 3"><polygon points="0,0 5,0 2.5,3" fill="#3a3c4c"/></svg>
<div class="abs" style="left:729px;top:32px;width:58px;height:69px;border:1px solid #9b9ebb;border-radius:4px;background:linear-gradient(#c8cbe5,#bec1dc)"></div>
<svg class="abs" style="left:750px;top:41px" width="19" height="19" viewBox="0 0 17 17"><path d="M4 1 L16.500 8 V13 L4 5.500 Z" fill="#f6e37a" stroke="#6a5a10" stroke-width="0.800"/><path d="M6 3.500 v2 M8 4.600 v2 M10 5.800 v2 M12 7 v2 M14 8.100 v2" stroke="#554" stroke-width="0.700"/><path d="M1 7.500 L12 13.500 L13 11.500 L17 16 L10.500 16.500 L11.200 14.800 L0.500 9 Z" fill="#2f8ee8" stroke="#1a66c0" stroke-width="0.600"/></svg>
<div class="t" style="left:733px;top:62px;font-size:11px;color:#2a2e6a;font-family:'Liberation Sans',sans-serif">Instant3D</div>
<svg class="abs" style="left:1190px;top:30px" width="90" height="72" viewBox="1190 30 90 72">
<g fill="#e2e4ee" stroke="none">
<path d="M1224 35.500 Q1240 32 1250 35.500 Q1253 39 1249 45 Q1242 55 1227 62.500 L1225.500 61 Q1238 52 1243 44 Q1246 38.500 1240 37.500 Q1232 36.500 1224 37 Z"/>
<path d="M1208 68 Q1226 64 1236 68.500 Q1240 72 1236 78 Q1226 92 1202 99.500 L1200 98 L1215 74 L1219 73 L1207 95 Q1222 88 1229 78 Q1232 72 1226 70.500 Q1218 69.500 1208 70.500 Z"/>
<path d="M1270 58.500 Q1256 56 1247 59.500 Q1244 62 1247 66 L1262 84 Q1263 87 1258 88 Q1246 90.500 1233 90 L1233 92.500 Q1250 94 1262 91 Q1268 88 1265 83 L1251 65 Q1250 62 1254 61 Q1262 59.500 1270 60.500 Z"/>
</g></svg>
<!-- TABROW -->
<div id="tabrow" class="abs"></div>
<div class="abs" id="fullline" style="left:0;top:102px;width:1280px;height:1px;background:#b4b7c8"></div>
<div class="abs" style="left:543px;top:103px;width:737px;height:1px;background:#5c6078"></div>
<div class="abs" style="left:0;top:103px;width:543px;height:20px;background:#c2c5d8;border-top:1px solid #4b4e66;border-bottom:1px solid #4b4e66"></div>
<div class="abs tab" style="left:57px;width:56px"><span>草图</span></div>
<div class="abs tab" style="left:113px;width:56px"><span>曲面</span></div>
<div class="abs tab" style="left:169px;width:56px"><span>钣金</span></div>
<div class="abs tab" style="left:225px;width:56px"><span>焊件</span></div>
<div class="abs tab" style="left:281px;width:64px"><span>模具工具</span></div>
<div class="abs tab" style="left:345px;width:56px"><span>评估</span></div>
<div class="abs tab" style="left:401px;width:67px"><span style="font-family:'Liberation Sans',sans-serif;font-size:13px">DimXpert</span></div>
<div class="abs tab" style="left:468px;width:75px"><span>办公室产品</span></div>
<div id="tabact" class="abs">特征</div>
<div class="abs" style="left:0;top:123px;width:215px;height:5px;background:linear-gradient(#cdd0e0 0,#cdd0e0 2px,#9a9eb4 2px,#9a9eb4 3px,#d9dce8 3px,#d9dce8 4px,#4a4e66 4px)"></div>
<!-- LEFT -->
<div id="lstrip" class="abs"></div>
<div id="lstrip2" class="abs"></div>
<div id="tree" class="abs"></div>
<div id="treeborder" class="abs"></div>
<div class="abs" style="left:5px;top:130px;width:21px;height:2px;background:repeating-linear-gradient(90deg,#8a8ea2 0,#8a8ea2 1px,#fff 1px,#fff 2px,transparent 2px,transparent 4px)"></div>
<svg class="abs" style="left:6px;top:142px" width="17" height="17" viewBox="0 0 17 17"><g fill="none" stroke="#a2a5b6" stroke-width="1.200"><path d="M1 5 L5 1 H16 V12 L12 16 H1 Z" fill="#f0f1f6" fill-opacity="0.6"/><path d="M1 5 H12 V16 M12 5 L16 1"/></g></svg>
<svg class="abs" style="left:6px;top:165px" width="17" height="17" viewBox="0 0 17 17"><g fill="none" stroke="#a2a5b6" stroke-width="1.200"><path d="M1 5 L5 1 H16 V12 L12 16 H1 Z" fill="#f0f1f6" fill-opacity="0.6"/><path d="M1 5 H12 V16 M12 5 L16 1"/><path d="M5 1 V12 H16 M5 12 L1 16" stroke="#c3c5d0"/></g></svg>
<svg class="abs" style="left:6px;top:188px" width="17" height="17" viewBox="0 0 17 17"><g fill="none" stroke="#a2a5b6" stroke-width="1.200"><path d="M1 5 L5 1 H16 V12 L12 16 H1 Z" fill="#f0f1f6" fill-opacity="0.6"/><path d="M1 5 H12 V16 M12 5 L16 1"/><path d="M5 1 V12 H16 M5 12 L1 16" stroke="#c3c5d0"/></g></svg>
<svg class="abs" style="left:6px;top:211px" width="17" height="17" viewBox="0 0 17 17"><g fill="none" stroke="#a2a5b6" stroke-width="1.200"><path d="M1 5 L5 1 H16 V12 L12 16 H1 Z" fill="#f0f1f6" fill-opacity="0.6"/><path d="M1 5 H12 V16 M12 5 L16 1"/><path d="M5 1 V12 H16 M5 12 L1 16" stroke="#c3c5d0"/></g></svg>
<svg class="abs" style="left:6px;top:234px" width="17" height="17" viewBox="0 0 17 17"><g fill="none" stroke="#a2a5b6" stroke-width="1.200"><path d="M1 5 L5 1 H16 V12 L12 16 H1 Z" fill="#f0f1f6" fill-opacity="0.6"/><path d="M1 5 H12 V16 M12 5 L16 1"/><path d="M5 1 V12 H16 M5 12 L1 16" stroke="#c3c5d0"/></g></svg>
<svg class="abs" style="left:6px;top:257px" width="17" height="17" viewBox="0 0 17 17"><g fill="none" stroke="#a2a5b6" stroke-width="1.200"><path d="M1 5 L5 1 H16 V12 L12 16 H1 Z" fill="#f0f1f6" fill-opacity="0.6"/><path d="M1 5 H12 V16 M12 5 L16 1"/><path d="M5 1 V12 H16 M5 12 L1 16" stroke="#c3c5d0"/></g></svg>
<svg class="abs" style="left:6px;top:280px" width="17" height="17" viewBox="0 0 17 17"><g fill="none" stroke="#a2a5b6" stroke-width="1.200"><path d="M1 5 L5 1 H16 V12 L12 16 H1 Z" fill="#f0f1f6" fill-opacity="0.6"/><path d="M1 5 H12 V16 M12 5 L16 1"/></g></svg>
<div class="abs" style="left:4px;top:304px;width:22px;height:1px;background:#aeb1c2"></div><div class="abs" style="left:4px;top:305px;width:22px;height:1px;background:#f2f3f8"></div>
<svg class="abs" style="left:6px;top:312px" width="18" height="18" viewBox="0 0 18 18"><path d="M1.500 2 V15.500 H10" fill="none" stroke="#2a3ab0" stroke-width="1.800"/><path d="M6 13 L7 9.500 L14 2 L16.500 4 L9.500 11.800 Z" fill="#f6d44a" stroke="#7a5a10" stroke-width="0.900"/><path d="M14 2 L16.500 4" stroke="#d05030" stroke-width="2"/><path d="M4 2 h4 M6 0 v4 M4.500 0.500 l3 3 M7.500 0.500 l-3 3" stroke="#e8a010" stroke-width="0.900"/></svg>
<svg class="abs" style="left:6px;top:335px" width="18" height="18" viewBox="0 0 18 18"><path d="M1 5.500 H8 M4.500 2 V9" stroke="#a9acba" stroke-width="1.600"/><path d="M6 16 L7 12 L14 4 L16.500 6 L9.500 14.500 Z" fill="#dcdde6" stroke="#a9acba" stroke-width="1"/></svg>
<svg class="abs" style="left:5px;top:357px" width="19" height="19" viewBox="0 0 19 19"><rect x="6" y="2.500" width="10.500" height="8.500" fill="none" stroke="#2a3ab0" stroke-width="1.800"/><circle cx="4" cy="8" r="2.800" fill="#22b022"/><circle cx="14.500" cy="15" r="2.800" fill="#22b022"/><path d="M4 11.500 V16 H9 M7 13.500 L9.500 16 L7 18.500" fill="none" stroke="#d01818" stroke-width="1.800"/></svg>
<div class="abs" style="left:4px;top:381px;width:22px;height:1px;background:#aeb1c2"></div><div class="abs" style="left:4px;top:382px;width:22px;height:1px;background:#f2f3f8"></div>
<svg class="abs" style="left:6px;top:389px" width="18" height="18" viewBox="0 0 18 18"><path d="M1 1.500 H9 L12.500 4.500 V13 H4.500 L1 10 Z" fill="url(#gy)" stroke="#6a5400" stroke-width="1" stroke-linejoin="round"/><rect x="4.500" y="4.500" width="8" height="8.500" fill="#f9dc4a" stroke="#6a5400" stroke-width="1" stroke-linejoin="round"/><path d="M1 1.500 H9 L12.500 4.500 H4.500 Z" fill="#fff7a0" stroke="#6a5400" stroke-width="1" stroke-linejoin="round"/><rect x="6" y="6" width="5.500" height="5.500" fill="#2fb52f" stroke="#0f7a12" stroke-width="0.8" stroke-linejoin="round"/><rect x="9.500" y="9.500" width="6.500" height="6.500" fill="none" stroke="#2a4ac0" stroke-width="1.200"/></svg>
<svg class="abs" style="left:6px;top:412px" width="18" height="18" viewBox="0 0 18 18"><path d="M1 1.500 H9 L12.500 4.500 V13 H4.500 L1 10 Z" fill="url(#gy)" stroke="#6a5400" stroke-width="1" stroke-linejoin="round"/><rect x="4.500" y="4.500" width="8" height="8.500" fill="#f9dc4a" stroke="#6a5400" stroke-width="1" stroke-linejoin="round"/><path d="M1 1.500 H9 L12.500 4.500 H4.500 Z" fill="#fff7a0" stroke="#6a5400" stroke-width="1" stroke-linejoin="round"/><rect x="6" y="6" width="5.500" height="5.500" fill="#2fb52f" stroke="#0f7a12" stroke-width="0.8" stroke-linejoin="round"/><rect x="9.500" y="9.500" width="6.500" height="6.500" fill="none" stroke="#2a4ac0" stroke-width="1.200"/></svg>
<div class="abs" style="left:0;top:437px;width:29px;height:1px;background:#f4f5fa"></div>
<div class="abs" style="left:29px;top:128px;width:185px;height:26px;background:#d5d8e6"></div>
<div class="abs" style="left:29px;top:153px;width:186px;height:1px;background:#9a9eb4"></div>
<div class="abs" style="left:30px;top:132px;width:27px;height:23px;border:1px solid #b5b8ca;border-bottom:none;border-radius:5px 5px 0 0;background:linear-gradient(#ffffff,#e6e8f0)"></div>
<div class="abs" style="left:57px;top:132px;width:27px;height:21px;border:1px solid #a5a8bc;border-bottom:none;border-radius:5px 5px 0 0;background:linear-gradient(#d9dbe8,#c3c6d8)"></div>
<div class="abs" style="left:85px;top:132px;width:27px;height:21px;border:1px solid #a5a8bc;border-bottom:none;border-radius:5px 5px 0 0;background:linear-gradient(#d9dbe8,#c3c6d8)"></div>
<div class="abs" style="left:113px;top:132px;width:27px;height:21px;border:1px solid #a5a8bc;border-bottom:none;border-radius:5px 5px 0 0;background:linear-gradient(#d9dbe8,#c3c6d8)"></div>
<div class="abs" style="left:141px;top:132px;width:27px;height:21px;border:1px solid #a5a8bc;border-bottom:none;border-radius:5px 5px 0 0;background:linear-gradient(#d9dbe8,#c3c6d8)"></div>
<svg class="abs" style="left:35px;top:134px" width="17" height="17" viewBox="0 0 17 17"><path d="M0.800 2.500 L4.500 1 L6 2.300 L6 1.200 L8.500 0.500 L12.800 3 L12.800 6.500 L16.200 9.300 L16.200 12 L9.800 15.800 L0.800 5.800 Z" fill="url(#gy)" stroke="#2a2000" stroke-width="1.300" stroke-linejoin="round"/><path d="M0.800 2.500 L9.800 12.500 L16.200 9.300 M9.800 12.500 V15.800 M6 2.300 L10 6 L12.800 4.500 M10 6 V9.500 M6 2.300 V4.500" fill="none" stroke="#2a2000" stroke-width="1"/><path d="M2.500 3 L4.500 2.200 L9.500 7.500 L10 11 Z" fill="#fff7a0" opacity="0.700"/></svg>
<svg class="abs" style="left:62px;top:134px" width="18" height="18" viewBox="0 0 18 18"><rect x="1.500" y="3.500" width="10.500" height="13" fill="#fff" stroke="#333" stroke-width="1.100"/><path d="M3.500 7 H10 M3.500 9.500 H10 M3.500 12 H10 M3.500 14.500 H10" stroke="#3a7ad8" stroke-width="1"/><path d="M6 4 L11 1 L16.500 3 L12 7 L9 6.500 Z" fill="#f0b878" stroke="#7a4a20" stroke-width="0.900"/></svg>
<svg class="abs" style="left:90px;top:134px" width="18" height="18" viewBox="0 0 18 18"><path d="M2 1 V17 M2 4.500 H7 M2 12 H7" stroke="#333" stroke-width="1.200"/><path d="M4.500 1 V17" stroke="#999" stroke-width="0.800"/><rect x="7" y="1.500" width="6" height="6" rx="1" fill="#f6d030" stroke="#6a5400" stroke-width="1" stroke-linejoin="round"/><rect x="10.500" y="9.500" width="6" height="6" rx="1" fill="#f6d030" stroke="#6a5400" stroke-width="1" stroke-linejoin="round"/></svg>
<svg class="abs" style="left:118px;top:134px" width="18" height="18" viewBox="0 0 18 18"><circle cx="9" cy="9" r="5" fill="none" stroke="#c050d8" stroke-width="1.800"/><path d="M9 0.500 V17.500 M0.500 9 H17.500" stroke="#c050d8" stroke-width="1.800"/><circle cx="9" cy="9" r="1.300" fill="#c050d8"/></svg>
<svg class="abs" style="left:146px;top:134px" width="19" height="18" viewBox="0 0 19 18"><rect x="1" y="1" width="13" height="12" fill="#1a1a1a"/><rect x="2.500" y="2.500" width="10" height="9" fill="#9ac0f0"/><path d="M2.500 11.500 L7 5 L11 11.500 Z" fill="#2a8a2a"/><circle cx="10.500" cy="4.500" r="1.500" fill="#f0a020"/><circle cx="13" cy="12.500" r="5" fill="#e03030"/><path d="M13 12.500 L13 7.500 A5 5 0 0 1 18 12.500 Z" fill="#3060e0"/><path d="M13 12.500 L18 12.500 A5 5 0 0 1 10 16.500 Z" fill="#30b030"/></svg>
<div class="t" style="left:201px;top:133px;font-size:16px;color:#555;font-family:'Liberation Sans',sans-serif">»</div>
<div class="abs" style="left:30px;top:156px;width:186px;height:17px;border:1px solid #a9adbf;border-radius:9px;background:linear-gradient(#dfe1ea 0,#ffffff 55%);box-shadow:inset 0 1px 1px rgba(100,104,130,.35)"></div>
<svg class="abs" style="left:38px;top:158px" width="12" height="13" viewBox="0 0 12 13"><path d="M0.500 1 H11.500 L7.500 6 V11.500 H4.500 V6 Z" fill="#3a8ae8" stroke="#1a4ab0" stroke-width="0.900"/><path d="M2.500 2.200 H9.500" stroke="#bfe0ff" stroke-width="1"/></svg>
<div class="abs" style="left:39px;top:194px;width:1px;height:243px;background:repeating-linear-gradient(#9a9cab 0,#9a9cab 1px,transparent 1px,transparent 2px)"></div>
<div class="abs" style="left:57px;top:338px;width:1px;height:10px;background:repeating-linear-gradient(#9a9cab 0,#9a9cab 1px,transparent 1px,transparent 2px)"></div>
<div class="abs" style="left:57px;top:446px;width:1px;height:28px;background:repeating-linear-gradient(#9a9cab 0,#9a9cab 1px,transparent 1px,transparent 2px)"></div>
<svg class="abs" style="left:31px;top:177px" width="17" height="17" viewBox="0 0 17 17"><path d="M0.800 2.500 L4.500 1 L6 2.300 L6 1.200 L8.500 0.500 L12.800 3 L12.800 6.500 L16.200 9.300 L16.200 12 L9.800 15.800 L0.800 5.800 Z" fill="url(#gy)" stroke="#2a2000" stroke-width="1.300" stroke-linejoin="round"/><path d="M0.800 2.500 L9.800 12.500 L16.200 9.300 M9.800 12.500 V15.800 M6 2.300 L10 6 L12.800 4.500 M10 6 V9.500 M6 2.300 V4.500" fill="none" stroke="#2a2000" stroke-width="1"/><path d="M2.500 3 L4.500 2.200 L9.500 7.500 L10 11 Z" fill="#fff7a0" opacity="0.700"/></svg>
<div class="t ti" style="left:52px;top:180px"><span style="font-family:'Liberation Mono',monospace;font-size:11px;letter-spacing:-0.6px">M8</span>螺栓</div>
<div class="abs" style="left:41px;top:203px;width:9px;height:1px;background:repeating-linear-gradient(90deg,#9a9cab 0,#9a9cab 1px,transparent 1px,transparent 2px)"></div>
<svg class="abs" style="left:50px;top:194px" width="17" height="17" viewBox="0 0 17 17"><path d="M1 15.500 V3 Q1 1.500 2.500 1.500 H6 L7.500 3.500 H15 Q16 3.500 16 4.500 V15.500 Z" fill="#f8cf4a" stroke="#c8901a" stroke-width="1"/><path d="M1.500 5.500 H15.500" stroke="#fbe9a0" stroke-width="1"/><circle cx="8.500" cy="10" r="4" fill="#fff" stroke="#333" stroke-width="1.200"/><path d="M6.500 12 L10.500 8" stroke="#2a50c8" stroke-width="1.400"/></svg>
<div class="t ti" style="left:71px;top:198px">传感器</div>
<div class="abs" style="left:41px;top:221px;width:9px;height:1px;background:repeating-linear-gradient(90deg,#9a9cab 0,#9a9cab 1px,transparent 1px,transparent 2px)"></div>
<div class="abs" style="left:35px;top:218px;width:9px;height:9px;border:1px solid #8a8c9c;border-radius:2px;background:linear-gradient(#fff,#d8dae4)"></div><div class="abs" style="left:37px;top:222px;width:5px;height:1px;background:#000"></div><div class="abs" style="left:39px;top:220px;width:1px;height:5px;background:#000"></div>
<svg class="abs" style="left:50px;top:212px" width="17" height="17" viewBox="0 0 17 17"><path d="M1 15.500 V3 Q1 1.500 2.500 1.500 H6 L7.500 3.500 H15 Q16 3.500 16 4.500 V15.500 Z" fill="#f8cf4a" stroke="#c8901a" stroke-width="1"/><path d="M1.500 5.500 H15.500" stroke="#fbe9a0" stroke-width="1"/><text x="4.200" y="14.500" font-family="Liberation Serif,serif" font-weight="bold" font-size="11.500" fill="#1a2a9a">A</text></svg>
<div class="t ti" style="left:71px;top:216px">注解</div>
<div class="abs" style="left:41px;top:239px;width:9px;height:1px;background:repeating-linear-gradient(90deg,#9a9cab 0,#9a9cab 1px,transparent 1px,transparent 2px)"></div>
<svg class="abs" style="left:50px;top:230px" width="17" height="17" viewBox="0 0 17 17"><circle cx="3.500" cy="3" r="2.300" fill="#e02020"/><circle cx="3.500" cy="8.500" r="2.300" fill="#2840d8"/><circle cx="3.500" cy="14" r="2.300" fill="#22aa22"/><path d="M8 3.500 H16 M8 8.800 H16 M8 14 H16" stroke="#222" stroke-width="1.800"/></svg>
<div class="t ti" style="left:71px;top:234px">材质 &lt;未指定&gt;</div>
<div class="abs" style="left:41px;top:257px;width:9px;height:1px;background:repeating-linear-gradient(90deg,#9a9cab 0,#9a9cab 1px,transparent 1px,transparent 2px)"></div>
<svg class="abs" style="left:50px;top:248px" width="17" height="17" viewBox="0 0 17 17"><path d="M1.500 7 L7.500 1.500 L15.500 10 L9.500 15.500 Z M6 7.500 L10.500 12 M0.500 0.500 L3 3 M14 14 L16.500 16.500" fill="none" stroke="#111" stroke-width="1.100"/></svg>
<div class="t ti" style="left:71px;top:252px">前视基准面</div>
<div class="abs" style="left:41px;top:275px;width:9px;height:1px;background:repeating-linear-gradient(90deg,#9a9cab 0,#9a9cab 1px,transparent 1px,transparent 2px)"></div>
<svg class="abs" style="left:50px;top:266px" width="17" height="17" viewBox="0 0 17 17"><path d="M1.500 7 L7.500 1.500 L15.500 10 L9.500 15.500 Z M6 7.500 L10.500 12 M0.500 0.500 L3 3 M14 14 L16.500 16.500" fill="none" stroke="#111" stroke-width="1.100"/></svg>
<div class="t ti" style="left:71px;top:270px">上视基准面</div>
<div class="abs" style="left:41px;top:293px;width:9px;height:1px;background:repeating-linear-gradient(90deg,#9a9cab 0,#9a9cab 1px,transparent 1px,transparent 2px)"></div>
<svg class="abs" style="left:50px;top:284px" width="17" height="17" viewBox="0 0 17 17"><path d="M1.500 7 L7.500 1.500 L15.500 10 L9.500 15.500 Z M6 7.500 L10.500 12 M0.500 0.500 L3 3 M14 14 L16.500 16.500" fill="none" stroke="#111" stroke-width="1.100"/></svg>
<div class="t ti" style="left:71px;top:288px">右视基准面</div>
<div class="abs" style="left:41px;top:311px;width:9px;height:1px;background:repeating-linear-gradient(90deg,#9a9cab 0,#9a9cab 1px,transparent 1px,transparent 2px)"></div>
<svg class="abs" style="left:50px;top:302px" width="17" height="17" viewBox="0 0 17 17"><path d="M4.500 14 V2 M4.500 14 H14" stroke="#b01818" stroke-width="1.300"/><path d="M2 4.500 L4.500 1 L7 4.500 M11.500 11.500 L15 14 L11.500 16.500" fill="none" stroke="#b01818" stroke-width="1.300"/><path d="M2 11.500 L7 16.500 M7 11.500 L2 16.500 M4.500 11 V17 M1.500 14 H7.500" stroke="#111" stroke-width="0.900"/></svg>
<div class="t ti" style="left:71px;top:306px">原点</div>
<div class="abs" style="left:41px;top:329px;width:9px;height:1px;background:repeating-linear-gradient(90deg,#9a9cab 0,#9a9cab 1px,transparent 1px,transparent 2px)"></div>
<div class="abs" style="left:35px;top:326px;width:9px;height:9px;border:1px solid #8a8c9c;border-radius:2px;background:linear-gradient(#fff,#d8dae4)"></div><div class="abs" style="left:37px;top:330px;width:5px;height:1px;background:#000"></div>
<svg class="abs" style="left:50px;top:320px" width="17" height="17" viewBox="0 0 17 17"><path d="M1 1.5 H11 L15 5 V15.5 H5 L1 12 Z" fill="url(#gy)" stroke="#6a5400" stroke-width="1" stroke-linejoin="round"/><rect x="5" y="5" width="10" height="10.5" fill="#f9dc4a" stroke="#6a5400" stroke-width="1" stroke-linejoin="round"/><path d="M1 1.5 H11 L15 5 H5 Z" fill="#fff7a0" stroke="#6a5400" stroke-width="1" stroke-linejoin="round"/><path d="M7 7.500 L10 5.500 L15 9.500 L12 11.500 Z" fill="#2fb52f" stroke="#0f7a12" stroke-width="0.8" stroke-linejoin="round"/><rect x="11" y="11" width="5.500" height="5.500" fill="#3fd03f" stroke="#0f7a12" stroke-width="0.8" stroke-linejoin="round"/></svg>
<div class="t ti" style="left:71px;top:324px">拉伸1</div>
<div class="abs" style="left:59px;top:347px;width:9px;height:1px;background:repeating-linear-gradient(90deg,#9a9cab 0,#9a9cab 1px,transparent 1px,transparent 2px)"></div>
<svg class="abs" style="left:68px;top:338px" width="17" height="17" viewBox="0 0 17 17"><path d="M2 1 H9 M1 1.500 V10 C1 14 5 16.500 9 16.500 H16.500" fill="none" stroke="#111" stroke-width="1.200"/><path d="M2 11 L13 4 C15 2.500 17 4.500 15 6 L4 12.500 Z" fill="#fff" stroke="#111" stroke-width="1"/><path d="M11.500 5 L13.500 7" stroke="#111" stroke-width="0.800"/></svg>
<div class="t ti" style="left:91px;top:342px"><span style="font-family:'Liberation Mono',monospace;font-size:10px">(-) </span>草图1</div>
<div class="abs" style="left:41px;top:365px;width:9px;height:1px;background:repeating-linear-gradient(90deg,#9a9cab 0,#9a9cab 1px,transparent 1px,transparent 2px)"></div>
<div class="abs" style="left:35px;top:362px;width:9px;height:9px;border:1px solid #8a8c9c;border-radius:2px;background:linear-gradient(#fff,#d8dae4)"></div><div class="abs" style="left:37px;top:366px;width:5px;height:1px;background:#000"></div><div class="abs" style="left:39px;top:364px;width:1px;height:5px;background:#000"></div>
<svg class="abs" style="left:50px;top:356px" width="17" height="17" viewBox="0 0 17 17"><path d="M1 1.5 H11 L15 5 V15.5 H5 L1 12 Z" fill="url(#gy)" stroke="#6a5400" stroke-width="1" stroke-linejoin="round"/><rect x="5" y="5" width="10" height="10.5" fill="#f9dc4a" stroke="#6a5400" stroke-width="1" stroke-linejoin="round"/><path d="M1 1.5 H11 L15 5 H5 Z" fill="#fff7a0" stroke="#6a5400" stroke-width="1" stroke-linejoin="round"/><path d="M7 7.500 L10 5.500 L15 9.500 L12 11.500 Z" fill="#2fb52f" stroke="#0f7a12" stroke-width="0.8" stroke-linejoin="round"/><rect x="11" y="11" width="5.500" height="5.500" fill="#3fd03f" stroke="#0f7a12" stroke-width="0.8" stroke-linejoin="round"/></svg>
<div class="t ti" style="left:71px;top:360px">拉伸2</div>
<div class="abs" style="left:41px;top:383px;width:9px;height:1px;background:repeating-linear-gradient(90deg,#9a9cab 0,#9a9cab 1px,transparent 1px,transparent 2px)"></div>
<svg class="abs" style="left:50px;top:374px" width="17" height="17" viewBox="0 0 17 17"><path d="M1 10 L8 1.500 L15.500 7 V15.500 H5 L1 13 Z" fill="url(#gy)" stroke="#6a5400" stroke-width="1" stroke-linejoin="round"/><path d="M1 10 L5 12 L11 5 M5 12 V15.500" fill="none" stroke="#6a5400" stroke-width="1" stroke-linejoin="round"/><path d="M1 10 L8 1.500 L11.500 4.500 L5 12 Z" fill="url(#gg)" stroke="#0f7a12" stroke-width="0.8" stroke-linejoin="round"/></svg>
<div class="t ti" style="left:71px;top:378px">倒角1</div>
<div class="abs" style="left:41px;top:401px;width:9px;height:1px;background:repeating-linear-gradient(90deg,#9a9cab 0,#9a9cab 1px,transparent 1px,transparent 2px)"></div>
<svg class="abs" style="left:50px;top:392px" width="17" height="17" viewBox="0 0 17 17"><path d="M1.500 7 L7.500 1.500 L15.500 10 L9.500 15.500 Z M6 7.500 L10.500 12 M0.500 0.500 L3 3 M14 14 L16.500 16.500" fill="none" stroke="#111" stroke-width="1.100"/></svg>
<div class="t ti" style="left:71px;top:396px">基准面1</div>
<div class="abs" style="left:41px;top:419px;width:9px;height:1px;background:repeating-linear-gradient(90deg,#9a9cab 0,#9a9cab 1px,transparent 1px,transparent 2px)"></div>
<div class="abs" style="left:35px;top:416px;width:9px;height:9px;border:1px solid #8a8c9c;border-radius:2px;background:linear-gradient(#fff,#d8dae4)"></div><div class="abs" style="left:37px;top:420px;width:5px;height:1px;background:#000"></div><div class="abs" style="left:39px;top:418px;width:1px;height:5px;background:#000"></div>
<svg class="abs" style="left:50px;top:410px" width="17" height="17" viewBox="0 0 17 17"><path d="M1 1.5 H11 L15 5 V15.5 H5 L1 12 Z" fill="url(#gy)" stroke="#6a5400" stroke-width="1" stroke-linejoin="round"/><rect x="5" y="5" width="10" height="10.5" fill="#f9dc4a" stroke="#6a5400" stroke-width="1" stroke-linejoin="round"/><path d="M1 1.5 H11 L15 5 H5 Z" fill="#fff7a0" stroke="#6a5400" stroke-width="1" stroke-linejoin="round"/><rect x="7.500" y="7.500" width="6" height="6" fill="#2fb52f" stroke="#0f7a12" stroke-width="0.8" stroke-linejoin="round"/><rect x="8" y="8" width="3" height="2.500" fill="#c8f5c0"/></svg>
<div class="t ti" style="left:71px;top:414px">拉伸3</div>
<div class="abs" style="left:41px;top:437px;width:9px;height:1px;background:repeating-linear-gradient(90deg,#9a9cab 0,#9a9cab 1px,transparent 1px,transparent 2px)"></div>
<div class="abs" style="left:35px;top:434px;width:9px;height:9px;border:1px solid #8a8c9c;border-radius:2px;background:linear-gradient(#fff,#d8dae4)"></div><div class="abs" style="left:37px;top:438px;width:5px;height:1px;background:#000"></div>
<svg class="abs" style="left:50px;top:428px" width="17" height="17" viewBox="0 0 17 17"><path d="M1 1.5 H11 L15 5 V15.5 H5 L1 12 Z" fill="url(#gy)" stroke="#6a5400" stroke-width="1" stroke-linejoin="round"/><rect x="5" y="5" width="10" height="10.5" fill="#f9dc4a" stroke="#6a5400" stroke-width="1" stroke-linejoin="round"/><path d="M1 1.5 H11 L15 5 H5 Z" fill="#fff7a0" stroke="#6a5400" stroke-width="1" stroke-linejoin="round"/><path d="M15 7.500 H10 C6.500 7.500 6.500 13.500 10 13.500 H15 V11.500 H10.500 C9.300 11.500 9.300 9.500 10.500 9.500 H15 Z" fill="#22a822" stroke="#0f7a12" stroke-width="0.8" stroke-linejoin="round"/></svg>
<div class="t ti" style="left:71px;top:432px">切除-扫描1</div>
<div class="abs" style="left:59px;top:455px;width:9px;height:1px;background:repeating-linear-gradient(90deg,#9a9cab 0,#9a9cab 1px,transparent 1px,transparent 2px)"></div>
<svg class="abs" style="left:68px;top:446px" width="17" height="17" viewBox="0 0 17 17"><path d="M2 1 H9 M1 1.500 V10 C1 14 5 16.500 9 16.500 H16.500" fill="none" stroke="#111" stroke-width="1.200"/><path d="M2 11 L13 4 C15 2.500 17 4.500 15 6 L4 12.500 Z" fill="#fff" stroke="#111" stroke-width="1"/><path d="M11.500 5 L13.500 7" stroke="#111" stroke-width="0.800"/></svg>
<div class="t ti" style="left:91px;top:450px"><span style="font-family:'Liberation Mono',monospace;font-size:10px">(-) </span>草图5</div>
<div class="abs" style="left:59px;top:473px;width:9px;height:1px;background:repeating-linear-gradient(90deg,#9a9cab 0,#9a9cab 1px,transparent 1px,transparent 2px)"></div>
<div class="abs" style="left:54px;top:470px;width:9px;height:9px;border:1px solid #8a8c9c;border-radius:2px;background:linear-gradient(#fff,#d8dae4)"></div><div class="abs" style="left:56px;top:474px;width:5px;height:1px;background:#000"></div><div class="abs" style="left:58px;top:472px;width:1px;height:5px;background:#000"></div>
<svg class="abs" style="left:68px;top:464px" width="17" height="17" viewBox="0 0 17 17"><ellipse cx="9" cy="5" rx="6.500" ry="3.500" fill="none" stroke="#111" stroke-width="1.200"/><ellipse cx="9" cy="12" rx="6.500" ry="3.500" fill="none" stroke="#111" stroke-width="1.200"/><path d="M2.500 12 C-1 16 2 17.500 5 16.500 M15.500 5 C18 2 16 0.500 13.500 1" fill="none" stroke="#111" stroke-width="1.100"/></svg>
<div class="t ti" style="left:90px;top:468px">螺旋线/涡状线1</div>
<div class="abs" style="left:29px;top:482px;width:186px;height:2px;background:#2a5aa8"></div>
<div class="abs" style="left:217px;top:387px;width:9px;height:29px;background:#e6e8f0;border:1px solid #4a4e66;border-left:none;border-top-color:#c8cbd8;border-radius:0 3px 3px 0"></div>
<svg class="abs" style="left:220px;top:391px" width="4" height="6" viewBox="0 0 4 6"><polygon points="4,0 4,6 0,3" fill="#4a4a80"/></svg>
<svg class="abs" style="left:220px;top:399px" width="4" height="6" viewBox="0 0 4 6"><polygon points="4,0 4,6 0,3" fill="#4a4a80"/></svg>
<svg class="abs" style="left:220px;top:407px" width="4" height="6" viewBox="0 0 4 6"><polygon points="4,0 4,6 0,3" fill="#4a4a80"/></svg>
<!-- BOTTOM -->
<div id="btabs" class="abs"></div>
<div id="status" class="abs"></div>
<div id="taskbar" class="abs"></div>
<div class="abs" style="left:0;top:698px;width:29px;height:16px;background:#c4c7d8"></div>
<div class="abs" style="left:0;top:713px;width:29px;height:1px;background:#eef0f6"></div>
<div class="abs" style="left:29px;top:698px;width:190px;height:1px;background:#3a3c4c"></div>
<div class="abs" style="left:31px;top:699px;width:66px;height:14px;background:#a8abbd;border:1px solid #8f92a8;border-top-color:#5a5d72"></div>
<div class="abs" style="left:33px;top:700px;width:15px;height:12px;border:1px solid #c3c6d4;border-right-color:#7f8296;border-bottom-color:#7f8296"></div>
<svg class="abs" style="left:35px;top:702px" width="12" height="9" viewBox="0 0 12 9"><path d="M3 1 V8" stroke="#cdd0dc" stroke-width="1.500"/><polygon points="9,1 9,8 4.500,4.500" fill="#cdd0dc"/></svg>
<div class="abs" style="left:48px;top:700px;width:15px;height:12px;border:1px solid #c3c6d4;border-right-color:#7f8296;border-bottom-color:#7f8296"></div>
<svg class="abs" style="left:50px;top:702px" width="12" height="9" viewBox="0 0 12 9"><polygon points="8,1 8,8 3.500,4.500" fill="#cdd0dc"/></svg>
<div class="abs" style="left:64px;top:700px;width:15px;height:12px;border:1px solid #c3c6d4;border-right-color:#7f8296;border-bottom-color:#7f8296"></div>
<svg class="abs" style="left:66px;top:702px" width="12" height="9" viewBox="0 0 12 9"><polygon points="4,1 4,8 8.500,4.500" fill="#cdd0dc"/></svg>
<div class="abs" style="left:79px;top:700px;width:15px;height:12px;border:1px solid #c3c6d4;border-right-color:#7f8296;border-bottom-color:#7f8296"></div>
<svg class="abs" style="left:81px;top:702px" width="12" height="9" viewBox="0 0 12 9"><path d="M9 1 V8" stroke="#cdd0dc" stroke-width="1.500"/><polygon points="3,1 3,8 7.500,4.500" fill="#cdd0dc"/></svg>
<div class="abs" style="left:98px;top:699px;width:44px;height:14px;background:linear-gradient(90deg,#f4f5f9,#e9ebf1 70%,#cfd2de);border:1px solid #7a7d92;border-top:none;border-left-color:#f4f5f9;border-bottom-color:#4e5168;text-align:center;font-size:12px;line-height:13px;color:#000"><span style="position:relative;top:1px">模型</span></div>
<div class="abs" style="left:143px;top:699px;width:77px;height:14px;background:#c3c6d7;border:1px solid #4e5168;text-align:left;padding-left:4px;font-size:12px;line-height:13px;word-spacing:2px;color:#111;white-space:nowrap;overflow:hidden">运动算例 1</div>
<div class="t" style="left:2px;top:719px;font-size:12px;color:#000">选择实体以修改其外观</div>
<div class="abs" style="left:1056px;top:717px;width:1px;height:15px;background:#f4f5fa"></div><div class="abs" style="left:1057px;top:717px;width:1px;height:15px;background:#a9acc0"></div>
<div class="abs" style="left:1064px;top:717px;width:1px;height:15px;background:#f4f5fa"></div><div class="abs" style="left:1065px;top:717px;width:1px;height:15px;background:#a9acc0"></div>
<div class="abs" style="left:1158px;top:717px;width:1px;height:15px;background:#f4f5fa"></div><div class="abs" style="left:1159px;top:717px;width:1px;height:15px;background:#a9acc0"></div>
<div class="abs" style="left:1166px;top:717px;width:1px;height:15px;background:#f4f5fa"></div><div class="abs" style="left:1167px;top:717px;width:1px;height:15px;background:#a9acc0"></div>
<div class="abs" style="left:1174px;top:717px;width:1px;height:15px;background:#f4f5fa"></div><div class="abs" style="left:1175px;top:717px;width:1px;height:15px;background:#a9acc0"></div>
<div class="t" style="left:1069px;top:719px;font-size:12px;color:#000">正在编辑：零件</div>
<div class="abs" style="left:1186px;top:717px;width:14px;height:14px;background:#fff;border:1px solid #3a4a7a;border-right-width:2px;border-bottom-width:2px;font-size:12px;font-weight:bold;color:#18a018;text-align:center;line-height:11px;font-family:'Liberation Sans',sans-serif">?</div>
<svg class="abs" style="left:1249px;top:715px" width="18" height="18" viewBox="0 0 18 18"><path d="M2 11 L10 2 L16 2.500 L16.500 8 L8 16.500 Z" fill="#f4c828" stroke="#a87a08" stroke-width="1.200" stroke-linejoin="round"/><circle cx="13.500" cy="5" r="1.300" fill="#fff" stroke="#a87a08" stroke-width="0.700"/><path d="M6 10.500 L10 6.500 M8 12.500 L12 8.500" stroke="#fff3b0" stroke-width="1.200"/></svg>
<div class="abs" style="left:0;top:738px;width:98px;height:28px;border-radius:0 13px 13px 0 / 0 14px 14px 0;background:linear-gradient(#2f7f2f 0,#7cc878 2px,#a5dca0 4px,#62b85e 7px,#48a646 12px,#3c9c3c 20px,#2f8a32 25px,#1f6a22 28px);box-shadow:1px 0 1px rgba(20,60,20,.8), inset -4px 0 4px rgba(20,90,20,.55)"></div>
<svg class="abs" style="left:10px;top:742px" width="20" height="20" viewBox="0 0 20 20"><path d="M2.500 3.500 Q6 1.500 9 3.500 L8 9.500 Q5 7.800 1.500 9.500 Z" fill="#e85a2a"/><path d="M10.500 3.800 Q14 6 17.500 3.800 L16.500 9.800 Q13 11.800 9.500 9.800 Z" fill="#6ab840"/><path d="M1.300 10.800 Q5 9 7.800 10.800 L6.800 16.800 Q3.500 15 0.300 16.800 Z" fill="#3a7ae0"/><path d="M9.300 11.200 Q12.500 13.200 16.300 11.200 L15.300 17 Q12 19 8.300 17 Z" fill="#f4c020"/></svg>
<div class="t" style="left:36px;top:743px;font-size:18px;font-style:italic;color:#fff;text-shadow:1px 1px 1px rgba(0,40,0,.6);font-family:'Liberation Sans','Noto Sans CJK SC',sans-serif;font-weight:300;transform:skewX(-8deg)">开始</div>
<svg class="abs" style="left:111px;top:744px" width="15" height="18" viewBox="0 0 15 18"><rect x="2.500" y="1" width="10" height="9" rx="1" fill="#8fc8ff" stroke="#b8c8e0" stroke-width="1"/><rect x="3.500" y="2" width="8" height="6.500" fill="#5aa8f8"/><path d="M4 11 L11 11 L13 16 L2 16 Z" fill="#e8ecf8" stroke="#a8b0c8" stroke-width="0.800"/></svg>
<svg class="abs" style="left:133px;top:744px" width="16" height="16" viewBox="0 0 16 16"><circle cx="8" cy="8" r="7" fill="#2a6ad8" stroke="#1a3a90" stroke-width="0.800"/><path d="M4 4 Q7 2 9 4.500 Q8 7 5.500 7.500 Q3 8 4 4 Z M9 8 Q12 7 13 10 Q11 13.500 9 12.500 Z" fill="#38b038"/></svg>
<svg class="abs" style="left:154px;top:743px" width="18" height="18" viewBox="0 0 18 18"><text x="2.500" y="15" font-family="Liberation Sans,sans-serif" font-size="18" font-weight="bold" fill="#3a9ae8">e</text><path d="M1 12 Q3 3 16 3.500" fill="none" stroke="#5ab8f8" stroke-width="1.600"/></svg>
<div class="t" style="left:182px;top:741px;font-size:12px;font-weight:bold;color:#111;font-family:'Liberation Sans',sans-serif">»</div>
<div class="abs" style="left:199px;top:741px;width:159px;height:24px;border:1px solid #a9a9c0;border-radius:3px;background:linear-gradient(#ffffff,#f2f2f7 60%,#dcdce8);box-shadow:0 1px 1px rgba(90,90,120,.5)"></div>
<svg class="abs" style="left:207px;top:744px" width="18" height="18" viewBox="0 0 18 18"><path d="M5 1.500 H13 L16.500 5 V16.500 H5 Z" fill="#fff" stroke="#555" stroke-width="1"/><path d="M13 1.500 V5 H16.500" fill="none" stroke="#555" stroke-width="0.800"/><text x="1" y="13.500" font-family="Liberation Sans,sans-serif" font-size="13" font-weight="bold" fill="#2a6ad8">e</text><path d="M0.500 10 Q3 4 10 5" fill="none" stroke="#3a8ae8" stroke-width="1.200"/></svg>
<div class="t" style="left:228px;top:747px;font-size:12px;color:#000">新手,请教 柱型螺...</div>
<div class="abs" style="left:359px;top:741px;width:159px;height:25px;border:1px solid #55606e;border-radius:3px;background:linear-gradient(#667280,#75818f 50%,#7e8a98);box-shadow:inset 1px 1px 2px rgba(30,40,50,.5)"></div>
<svg class="abs" style="left:368px;top:744px" width="18" height="18" viewBox="0 0 18 18"><polygon points="9,1 17,3.500 17,13.500 9,17 1,13.500 1,3.500" fill="#c8242a"/><polygon points="9,1 17,3.500 9,6.500 1,3.500" fill="#e86a62"/><polygon points="9,6.500 17,3.500 17,13.500 9,17" fill="#a81a20"/><text x="1.800" y="13" font-family="Liberation Sans,sans-serif" font-weight="bold" font-size="7.500" fill="#fff" transform="skewY(8)">S</text><text x="8.600" y="15.600" font-family="Liberation Sans,sans-serif" font-weight="bold" font-size="7.500" fill="#fff" transform="skewY(-10)">W</text></svg>
<div class="t" style="left:388px;top:749px;font-size:10px;color:#fff;font-family:'Liberation Mono',monospace;letter-spacing:0px">SolidWorks Profe...</div>
<div class="abs" style="left:1113px;top:738px;width:167px;height:30px;background:linear-gradient(#ffffff 0%,#ffffff 40%,#f0f0f4 70%,#d8d8e2 92%,#9a9cb4 100%);border-left:2px solid #6a6c84"></div>
<svg class="abs" style="left:1087px;top:744px" width="16" height="16" viewBox="0 0 16 16"><circle cx="8" cy="8" r="6.500" fill="#e8f4ff" stroke="#2a8ae8" stroke-width="2"/><path d="M3 9 L7 7 L9 9 L13 7" stroke="#e86a20" stroke-width="1.800" fill="none"/></svg>
<svg class="abs" style="left:1103px;top:742px" width="20" height="20" viewBox="0 0 20 20"><circle cx="10" cy="10" r="9" fill="#9a9ab0" stroke="#e8e8f0" stroke-width="1.200"/><circle cx="10" cy="9" r="6.500" fill="#b8b8cc"/><path d="M12 5.500 L7.500 10 L12 14.500" fill="none" stroke="#fff" stroke-width="2.200"/></svg>
<svg class="abs" style="left:1123px;top:743px" width="18" height="18" viewBox="0 0 18 18"><ellipse cx="8" cy="5" rx="4" ry="4" fill="#111"/><ellipse cx="8" cy="11" rx="5.500" ry="5" fill="#111"/><ellipse cx="8" cy="11.500" rx="3.300" ry="3.800" fill="#fff"/><path d="M3.500 8 Q8 10.500 12.500 8 L12 10 Q8 12 4 10 Z" fill="#e02020"/><ellipse cx="8" cy="6.500" rx="2" ry="0.900" fill="#f0a020"/><circle cx="6.600" cy="4" r="0.900" fill="#fff"/><circle cx="9.400" cy="4" r="0.900" fill="#fff"/><circle cx="12.500" cy="13" r="3.800" fill="#f4c020" stroke="#a87a08" stroke-width="0.600"/><path d="M10.500 12.200 h4 M10.500 13.800 h4" stroke="#fff" stroke-width="0.900"/></svg>
<svg class="abs" style="left:1141px;top:743px" width="18" height="18" viewBox="0 0 18 18"><ellipse cx="8" cy="5" rx="4" ry="4" fill="#111"/><ellipse cx="8" cy="11" rx="5.500" ry="5" fill="#111"/><ellipse cx="8" cy="11.500" rx="3.300" ry="3.800" fill="#fff"/><path d="M3.500 8 Q8 10.500 12.500 8 L12 10 Q8 12 4 10 Z" fill="#e02020"/><ellipse cx="8" cy="6.500" rx="2" ry="0.900" fill="#f0a020"/><circle cx="6.600" cy="4" r="0.900" fill="#fff"/><circle cx="9.400" cy="4" r="0.900" fill="#fff"/><circle cx="12.500" cy="13" r="3.800" fill="#f4c020" stroke="#a87a08" stroke-width="0.600"/><path d="M10.500 12.200 h4 M10.500 13.800 h4" stroke="#fff" stroke-width="0.900"/></svg>
<svg class="abs" style="left:1160px;top:743px" width="17" height="17" viewBox="0 0 17 17"><rect x="6" y="1" width="9" height="7.500" fill="#3a4aa8" stroke="#9aa0c8" stroke-width="0.800"/><rect x="1.500" y="6" width="9" height="7.500" fill="#2a3a98" stroke="#9aa0c8" stroke-width="0.800"/><path d="M3 15.500 H9 M11 10.500 H15" stroke="#8a8aa8" stroke-width="1.500"/></svg>
<svg class="abs" style="left:1177px;top:743px" width="17" height="17" viewBox="0 0 17 17"><rect x="6" y="1" width="9" height="7.500" fill="#3a4aa8" stroke="#9aa0c8" stroke-width="0.800"/><rect x="1.500" y="6" width="9" height="7.500" fill="#2a3a98" stroke="#9aa0c8" stroke-width="0.800"/><path d="M3 15.500 H9 M11 10.500 H15" stroke="#8a8aa8" stroke-width="1.500"/></svg>
<svg class="abs" style="left:1195px;top:743px" width="18" height="18" viewBox="0 0 18 18"><path d="M2 9 Q2 2 9 2 H16.500 V9 Q16.500 16.500 9 16.500 Q2 16.500 2 9 Z" fill="#18a8b8" stroke="#0a6a78" stroke-width="0.800"/><circle cx="9" cy="9.300" r="4.500" fill="#d8f8ff"/><circle cx="9" cy="9.300" r="2.300" fill="#1890a8"/></svg>
<div class="abs" style="left:1216px;top:745px;width:12px;height:13px;background:#0a6a18;background-image:repeating-linear-gradient(90deg,transparent 0,transparent 2px,#2a9a38 2px,#2a9a38 3px),repeating-linear-gradient(transparent 0,transparent 2px,#2a9a38 2px,#2a9a38 3px)"></div>
<div class="t" style="left:1237px;top:747px;font-size:11px;color:#000;font-family:'Liberation Sans',sans-serif;letter-spacing:0.5px">11:36</div>
</body>
</html>
